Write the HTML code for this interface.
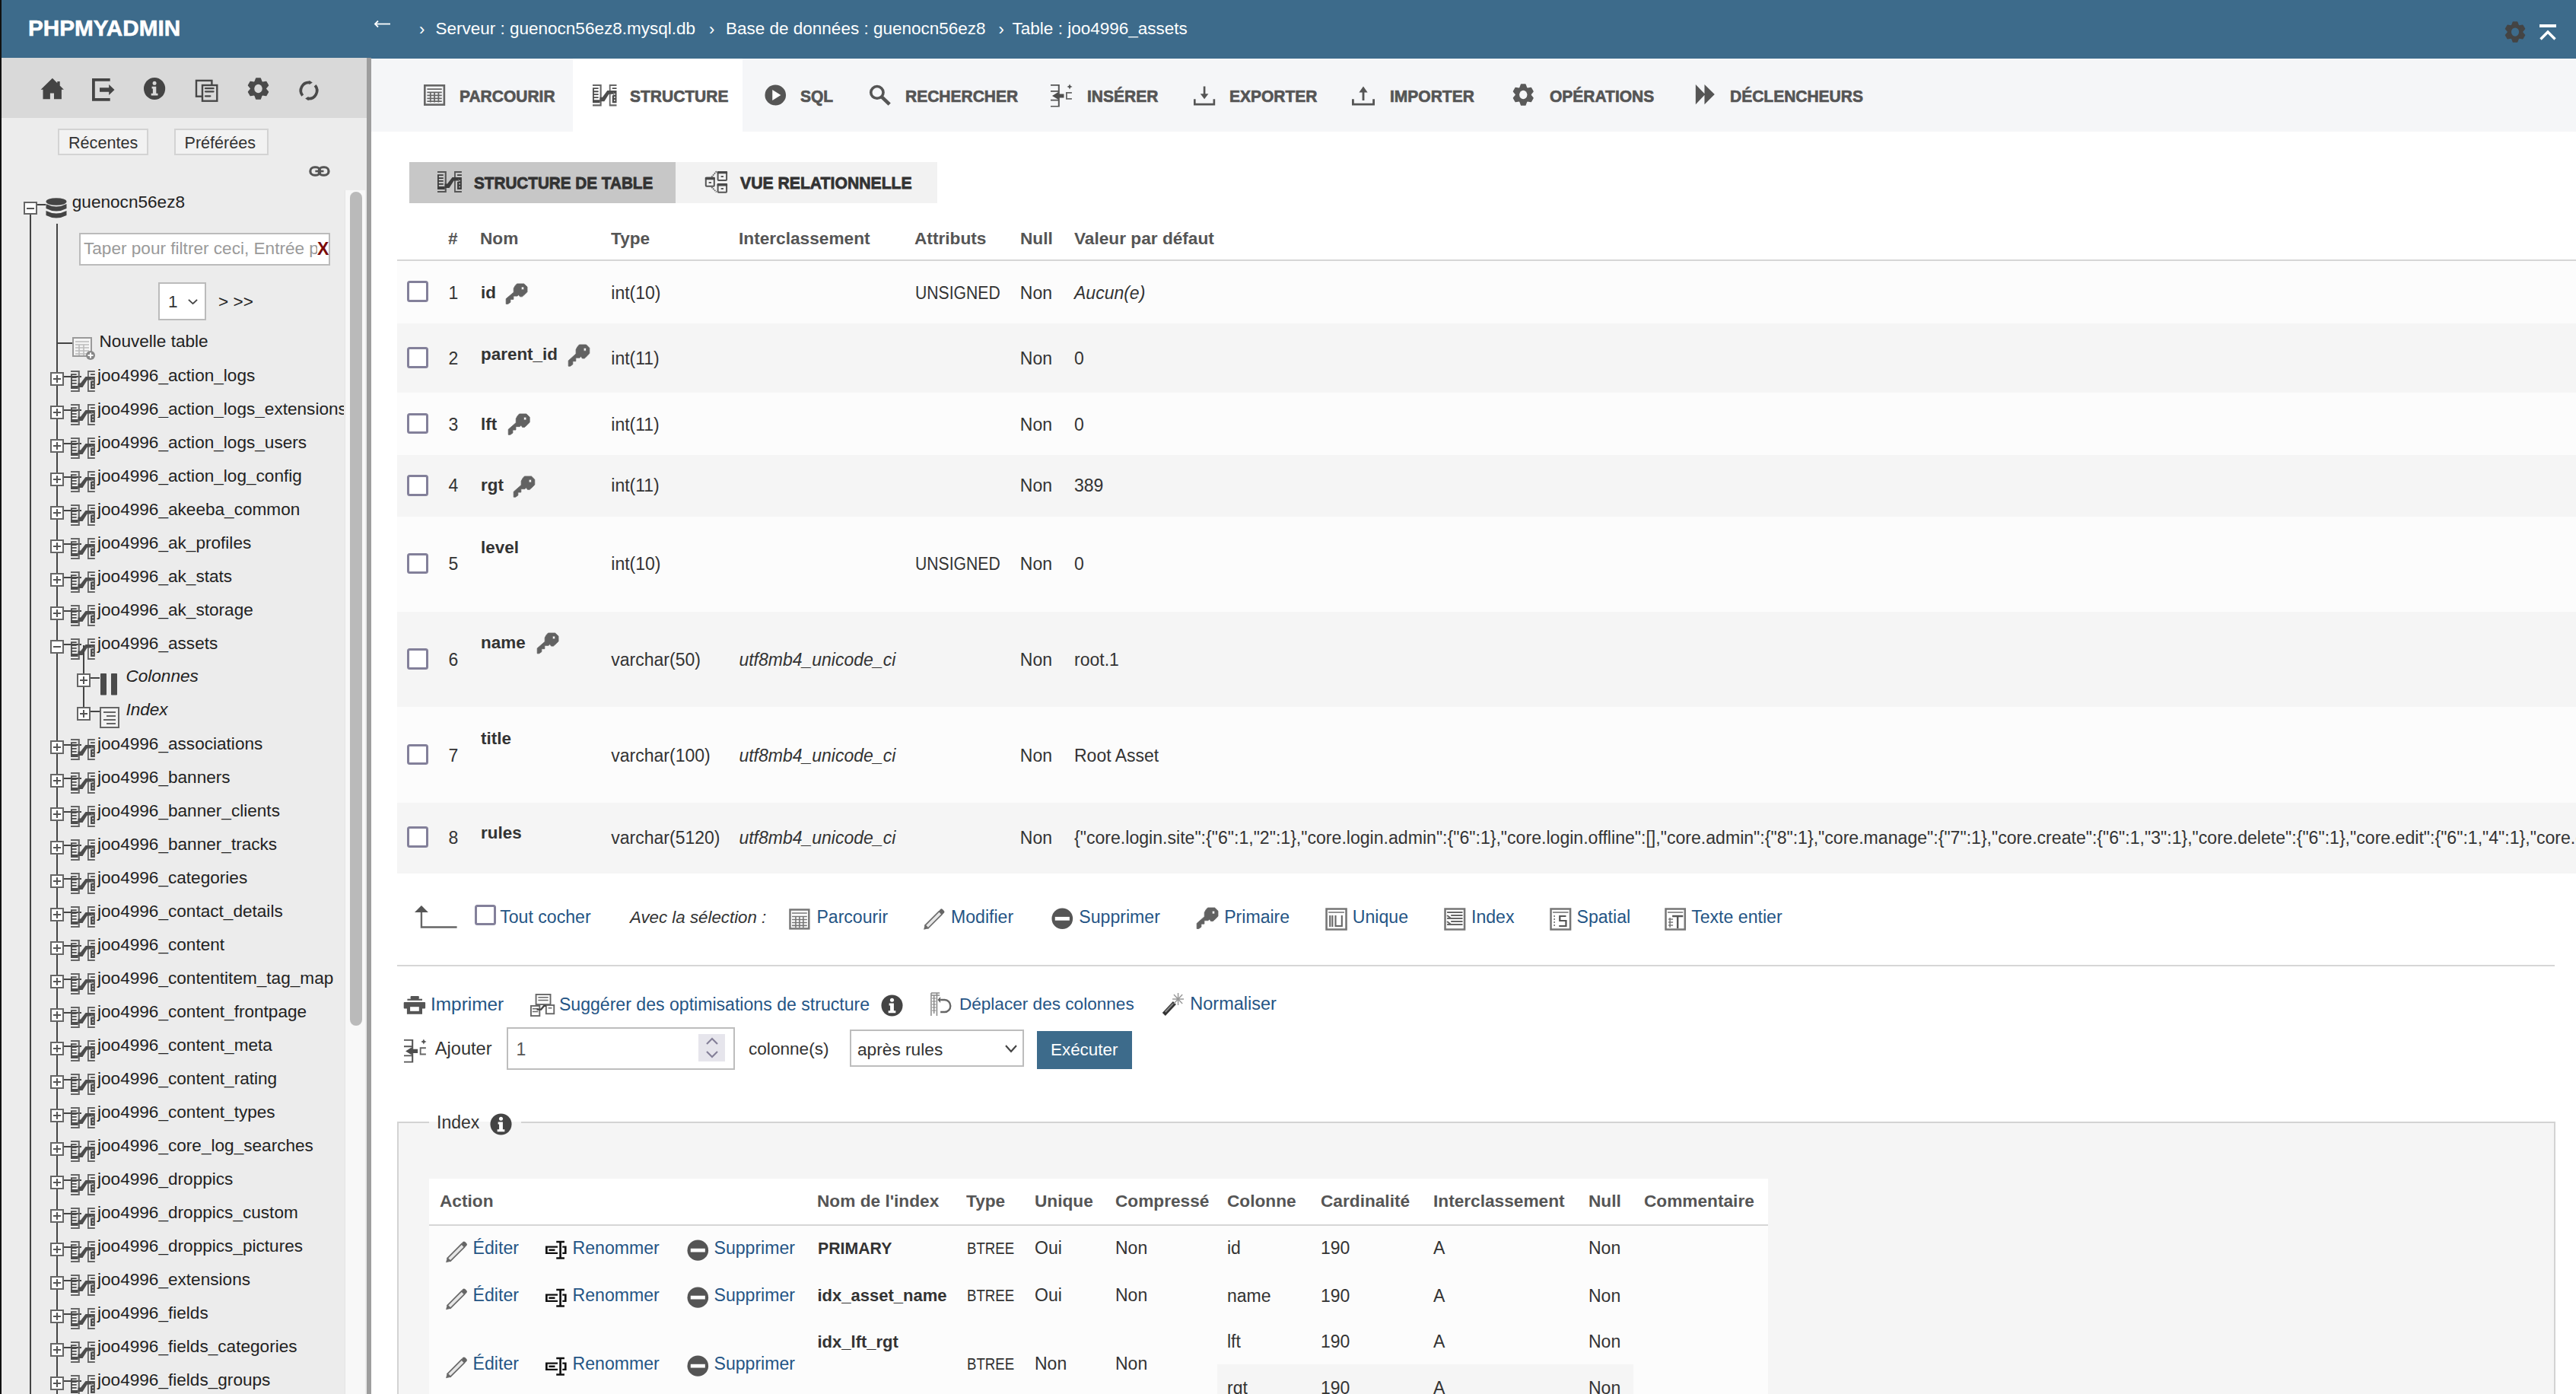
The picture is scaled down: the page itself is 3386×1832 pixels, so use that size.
<!DOCTYPE html><html><head><meta charset="utf-8"><style>
html,body{margin:0;padding:0;overflow:hidden;}
body{width:3386px;height:1832px;overflow:hidden;position:relative;background:#fff;font-family:"Liberation Sans",sans-serif;}
.t{position:absolute;white-space:pre;}
.r{position:absolute;}
svg.r{overflow:visible}
</style></head><body><div class="r" style="left:0.0px;top:0.0px;width:3386.0px;height:77.0px;background:#3d6b8b;"></div><div class="r" style="left:0.0px;top:0.0px;width:2.0px;height:1832.0px;background:#111;"></div><div class="t" style="left:37.0px;top:21.9px;font-size:29.7px;line-height:29.7px;font-weight:700;color:#fff;-webkit-text-stroke:0.6px #fff;">PHPMYADMIN</div><svg class="r" style="left:491.6px;top:27.0px;" width="21.0" height="9.0" viewBox="0 0 21 9" preserveAspectRatio="none"><path d="M1,4.5 L21,4.5" stroke="#fff" stroke-width="1.8"/><path d="M5,0.5 L1,4.5 L5,8.5" fill="none" stroke="#fff" stroke-width="1.8"/></svg><div class="t" style="left:572.5px;top:27.0px;font-size:22.5px;line-height:22.5px;font-weight:400;color:#fff;">Serveur : guenocn56ez8.mysql.db</div><div class="t" style="left:954.0px;top:27.0px;font-size:22.5px;line-height:22.5px;font-weight:400;color:#fff;">Base de données : guenocn56ez8</div><div class="t" style="left:1330.6px;top:27.0px;font-size:22.5px;line-height:22.5px;font-weight:400;color:#fff;">Table : joo4996_assets</div><div class="t" style="left:551.0px;top:28.4px;font-size:22px;line-height:22px;font-weight:400;color:#fff;">&#8250;</div><div class="t" style="left:932.0px;top:28.4px;font-size:22px;line-height:22px;font-weight:400;color:#fff;">&#8250;</div><div class="t" style="left:1312.5px;top:28.4px;font-size:22px;line-height:22px;font-weight:400;color:#fff;">&#8250;</div><svg class="r" style="left:3291.0px;top:27.0px;" width="30.0" height="30.0" viewBox="0 0 32 32" preserveAspectRatio="none"><circle cx="16" cy="16" r="10.8" fill="#444"/><path d="M11,8 L13.2,2.2 L18.8,2.2 L21,8 Z" fill="#444" stroke="#444" stroke-width="1.6" stroke-linejoin="round" transform="rotate(0 16 16)"/><path d="M11,8 L13.2,2.2 L18.8,2.2 L21,8 Z" fill="#444" stroke="#444" stroke-width="1.6" stroke-linejoin="round" transform="rotate(60 16 16)"/><path d="M11,8 L13.2,2.2 L18.8,2.2 L21,8 Z" fill="#444" stroke="#444" stroke-width="1.6" stroke-linejoin="round" transform="rotate(120 16 16)"/><path d="M11,8 L13.2,2.2 L18.8,2.2 L21,8 Z" fill="#444" stroke="#444" stroke-width="1.6" stroke-linejoin="round" transform="rotate(180 16 16)"/><path d="M11,8 L13.2,2.2 L18.8,2.2 L21,8 Z" fill="#444" stroke="#444" stroke-width="1.6" stroke-linejoin="round" transform="rotate(240 16 16)"/><path d="M11,8 L13.2,2.2 L18.8,2.2 L21,8 Z" fill="#444" stroke="#444" stroke-width="1.6" stroke-linejoin="round" transform="rotate(300 16 16)"/><ellipse cx="16" cy="16" rx="5.4" ry="6" fill="#3d6b8b"/></svg><svg class="r" style="left:3338.0px;top:31.0px;" width="22.0" height="22.0" viewBox="0 0 22 22" preserveAspectRatio="none"><rect x="0" y="1" width="22" height="4" fill="#fff"/><path d="M1.5,20.5 L11,11 L20.5,20.5" fill="none" stroke="#fff" stroke-width="3.4"/></svg><div class="r" style="left:2.0px;top:76.0px;width:480.0px;height:79.0px;background:#d9d9d9;"></div><div class="r" style="left:2.0px;top:155.0px;width:480.0px;height:1677.0px;background:#ececec;"></div><div class="r" style="left:482.0px;top:76.0px;width:6.0px;height:1756.0px;background:#9e9e9e;"></div><svg class="r" style="left:53.0px;top:102.0px;" width="31.0" height="29.0" viewBox="0 0 31 29" preserveAspectRatio="none"><path fill="#444" d="M15.9,0.8 L30.9,15.8 L27.9,15.8 L27.9,28.2 L18,28.2 L18,20.5 L12.9,20.5 L12.9,28.2 L3.5,28.2 L3.5,15.8 L0.6,15.8 Z M22.3,5 L25.7,5 L25.7,10.8 L22.3,7.4 Z"/></svg><svg class="r" style="left:120.0px;top:102.0px;" width="31.0" height="31.0" viewBox="0 0 31 31" preserveAspectRatio="none"><path fill="#444" d="M1,1 H24.7 V4.8 H4.8 V26.9 H24.7 V30.7 H1 Z M11,13.2 H23.2 V9 L30.5,16 L23.2,23 V18.8 H11 Z"/></svg><svg class="r" style="left:188.8px;top:102.0px;" width="28.2" height="29.0" viewBox="0 0 32 32" preserveAspectRatio="none"><circle cx="16" cy="16" r="16" fill="#444"/><circle cx="16" cy="8" r="2.8" fill="#d9d9d9"/><path fill="#d9d9d9" d="M12,13 L18.5,13 L18.5,23 L21,23 L21,26 L11,26 L11,23 L13.5,23 L13.5,16 L12,16 Z"/></svg><svg class="r" style="left:255.0px;top:103.0px;" width="32.0" height="31.0" viewBox="0 0 32 31" preserveAspectRatio="none"><rect x="3" y="2.9" width="20.4" height="20.8" fill="none" stroke="#474747" stroke-width="2.4"/><rect x="11" y="9" width="19.3" height="20.7" fill="#d9d9d9" stroke="#474747" stroke-width="2.4"/><path stroke="#474747" stroke-width="2.2" stroke-linecap="round" d="M15,13.2 H25.6 M15,17.3 H25.6 M15,23.3 H21.4"/></svg><svg class="r" style="left:323.5px;top:101.0px;" width="31.0" height="31.0" viewBox="0 0 32 32" preserveAspectRatio="none"><circle cx="16" cy="16" r="10.8" fill="#4a4a4a"/><path d="M11,8 L13.2,2.2 L18.8,2.2 L21,8 Z" fill="#4a4a4a" stroke="#4a4a4a" stroke-width="1.6" stroke-linejoin="round" transform="rotate(0 16 16)"/><path d="M11,8 L13.2,2.2 L18.8,2.2 L21,8 Z" fill="#4a4a4a" stroke="#4a4a4a" stroke-width="1.6" stroke-linejoin="round" transform="rotate(60 16 16)"/><path d="M11,8 L13.2,2.2 L18.8,2.2 L21,8 Z" fill="#4a4a4a" stroke="#4a4a4a" stroke-width="1.6" stroke-linejoin="round" transform="rotate(120 16 16)"/><path d="M11,8 L13.2,2.2 L18.8,2.2 L21,8 Z" fill="#4a4a4a" stroke="#4a4a4a" stroke-width="1.6" stroke-linejoin="round" transform="rotate(180 16 16)"/><path d="M11,8 L13.2,2.2 L18.8,2.2 L21,8 Z" fill="#4a4a4a" stroke="#4a4a4a" stroke-width="1.6" stroke-linejoin="round" transform="rotate(240 16 16)"/><path d="M11,8 L13.2,2.2 L18.8,2.2 L21,8 Z" fill="#4a4a4a" stroke="#4a4a4a" stroke-width="1.6" stroke-linejoin="round" transform="rotate(300 16 16)"/><ellipse cx="16" cy="16" rx="5.4" ry="6" fill="#d9d9d9"/></svg><svg class="r" style="left:392.0px;top:105.0px;" width="28.0" height="28.0" viewBox="0 0 28 28" preserveAspectRatio="none"><path fill="none" stroke="#4a4a4a" stroke-width="3.7" d="M15.1,3.46 A10.6,10.6 0 0,0 5.69,20.58 M22.17,7.24 A10.6,10.6 0 0,1 12.89,24.54"/><path fill="#4a4a4a" d="M14.5,0.8 L18.8,3.5 L14.5,6.2 Z M13.5,21.8 L9.2,24.5 L13.5,27.2 Z"/></svg><div class="r" style="left:76.0px;top:169.0px;width:119.0px;height:35.0px;background:#f2f2f2;border:2px solid #d3d3d3;box-sizing:border-box;"></div><div class="r" style="left:229.0px;top:169.0px;width:124.0px;height:35.0px;background:#f2f2f2;border:2px solid #d3d3d3;box-sizing:border-box;"></div><div class="t" style="left:90.0px;top:176.7px;font-size:21.6px;line-height:21.6px;font-weight:400;color:#333;">Récentes</div><div class="t" style="left:242.5px;top:176.7px;font-size:21.6px;line-height:21.6px;font-weight:400;color:#333;">Préférées</div><svg class="r" style="left:405.7px;top:218.0px;" width="27.9" height="14.0" viewBox="0 0 30 16" preserveAspectRatio="none"><rect x="2" y="2" width="14" height="12" rx="6" fill="none" stroke="#555" stroke-width="3.5"/><rect x="14" y="2" width="14" height="12" rx="6" fill="none" stroke="#555" stroke-width="3.5"/><rect x="9" y="6.5" width="12" height="3" fill="#555"/></svg><div class="r" style="left:452.5px;top:250.0px;width:1.5px;height:1582.0px;background:#e4e4e4;"></div><div class="r" style="left:454.0px;top:250.0px;width:26.0px;height:1582.0px;background:#f8f8f8;"></div><div class="r" style="left:460.0px;top:252.0px;width:16.0px;height:1095.5px;background:#bababa;border-radius:8px;"></div><div class="r" style="left:39.0px;top:282.0px;width:2.0px;height:1550.0px;background:#444;"></div><div class="r" style="left:73.7px;top:294.0px;width:2.0px;height:1538.0px;background:#444;"></div><div class="r" style="left:31.0px;top:265.0px;width:17.6px;height:17.0px;background:#fff;border:2px solid #666;box-sizing:border-box;"></div><div class="r" style="left:35.0px;top:272.5px;width:9.6px;height:2.0px;background:#555;"></div><div class="r" style="left:48.6px;top:267.5px;width:11.4px;height:2.0px;background:#444;"></div><svg class="r" style="left:60.0px;top:260.0px;" width="28.0" height="28.0" viewBox="0 0 28 28" preserveAspectRatio="none"><ellipse cx="14" cy="5" rx="13.5" ry="4.8" fill="#444"/><path fill="#444" d="M0.5,8 Q14,15 27.5,8 L27.5,14 Q14,21 0.5,14 Z M0.5,17 Q14,24 27.5,17 L27.5,23 Q14,30 0.5,23 Z"/></svg><div class="t" style="left:94.8px;top:255.1px;font-size:22.6px;line-height:22.6px;font-weight:400;color:#222;">guenocn56ez8</div><div class="r" style="left:104.0px;top:306.0px;width:330.0px;height:43.0px;background:#fff;border:2px solid #bbb;box-sizing:border-box;"></div><div class="t" style="left:110.0px;top:315.9px;font-size:22.6px;line-height:22.6px;font-weight:400;color:#9a9a9a;width:307px;overflow:hidden;">Taper pour filtrer ceci, Entrée p</div><div class="t" style="left:417.0px;top:315.5px;font-size:23px;line-height:23px;font-weight:700;color:#7a0a0a;">X</div><div class="r" style="left:208.0px;top:371.0px;width:63.0px;height:50.4px;background:#fff;border:2px solid #bbb;box-sizing:border-box;"></div><div class="t" style="left:221.0px;top:385.9px;font-size:22.6px;line-height:22.6px;font-weight:400;color:#333;">1</div><svg class="r" style="left:247.0px;top:393.0px;" width="13.0" height="7.0" viewBox="0 0 14 8" preserveAspectRatio="none"><path d="M1,1 L7,7 L13,1" fill="none" stroke="#444" stroke-width="2"/></svg><div class="t" style="left:287.0px;top:385.9px;font-size:22.6px;line-height:22.6px;font-weight:400;color:#222;">&gt; &gt;&gt;</div><div class="r" style="left:75.7px;top:450.0px;width:19.3px;height:2.0px;background:#444;"></div><svg class="r" style="left:95.0px;top:443.0px;" width="30.0" height="30.0" viewBox="0 0 30 30" preserveAspectRatio="none"><rect x="1" y="1" width="24" height="24" fill="#f4f4f4" stroke="#9a9a9a" stroke-width="2"/><path stroke="#bbb" stroke-width="1.6" d="M4,6 L22,6 M4,10 L22,10 M4,14 L22,14 M4,18 L22,18 M4,22 L22,22 M9,10 L9,24 M15,10 L15,24"/><circle cx="24" cy="24" r="6" fill="#888"/><path stroke="#fff" stroke-width="2" d="M24,20.5 L24,27.5 M20.5,24 L27.5,24"/></svg><div class="t" style="left:130.5px;top:437.9px;font-size:22.6px;line-height:22.6px;font-weight:400;color:#222;">Nouvelle table</div><div class="r" style="left:66.0px;top:489.3px;width:18.0px;height:18.0px;background:#fff;border:2px solid #666;box-sizing:border-box;"></div><div class="r" style="left:70.0px;top:497.3px;width:10.0px;height:2.0px;background:#555;"></div><div class="r" style="left:74.0px;top:493.3px;width:2.0px;height:10.0px;background:#555;"></div><div class="r" style="left:84.0px;top:494.0px;width:23.0px;height:2.0px;background:#444;"></div><svg class="r" style="left:93.0px;top:487.0px;" width="32.0" height="28.0" viewBox="0 0 32 28" preserveAspectRatio="none"><path fill="#666" d="M0,0 H11.8 V28 H0 V26 H9.7 V2 H0 Z"/><path fill="#4d4d4d" d="M0,4.2 H1.8 V24 H0 Z M0,4.2 H7.7 V6 H0 Z M0,8.2 H7.7 V10 H0 Z M0,12 H7.7 V13.8 H0 Z M0,16 H7.7 V17.8 H0 Z M0,20 H9.7 V24 H0 Z"/><path fill="#666" d="M22,0 H31.8 V2 H23.8 V26 H31.8 V28 H22 Z"/><path fill="#4d4d4d" d="M26,4.2 H31.8 V6 H26 Z M23.8,8 H31.8 V10 H23.8 Z M27.6,8 H31.8 V24 H27.6 Z M26,14 H27.6 V24 H26 Z"/><rect x="28.3" y="11.8" width="1.6" height="1.6" fill="#ececec"/><rect x="28.3" y="15.8" width="1.6" height="1.6" fill="#ececec"/><rect x="28.3" y="19.8" width="1.6" height="1.6" fill="#ececec"/><path fill="#4d4d4d" d="M9.5,16.5 L13,16.5 L19.5,8 L27.6,8 L27.6,12.5 L21.5,12.5 L15.5,22 L9.5,22 Z"/></svg><div class="t" style="left:128.0px;top:482.9px;font-size:22.6px;line-height:22.6px;font-weight:400;color:#222;">joo4996_action_logs</div><div class="r" style="left:66.0px;top:533.3px;width:18.0px;height:18.0px;background:#fff;border:2px solid #666;box-sizing:border-box;"></div><div class="r" style="left:70.0px;top:541.3px;width:10.0px;height:2.0px;background:#555;"></div><div class="r" style="left:74.0px;top:537.3px;width:2.0px;height:10.0px;background:#555;"></div><div class="r" style="left:84.0px;top:538.0px;width:23.0px;height:2.0px;background:#444;"></div><svg class="r" style="left:93.0px;top:531.0px;" width="32.0" height="28.0" viewBox="0 0 32 28" preserveAspectRatio="none"><path fill="#666" d="M0,0 H11.8 V28 H0 V26 H9.7 V2 H0 Z"/><path fill="#4d4d4d" d="M0,4.2 H1.8 V24 H0 Z M0,4.2 H7.7 V6 H0 Z M0,8.2 H7.7 V10 H0 Z M0,12 H7.7 V13.8 H0 Z M0,16 H7.7 V17.8 H0 Z M0,20 H9.7 V24 H0 Z"/><path fill="#666" d="M22,0 H31.8 V2 H23.8 V26 H31.8 V28 H22 Z"/><path fill="#4d4d4d" d="M26,4.2 H31.8 V6 H26 Z M23.8,8 H31.8 V10 H23.8 Z M27.6,8 H31.8 V24 H27.6 Z M26,14 H27.6 V24 H26 Z"/><rect x="28.3" y="11.8" width="1.6" height="1.6" fill="#ececec"/><rect x="28.3" y="15.8" width="1.6" height="1.6" fill="#ececec"/><rect x="28.3" y="19.8" width="1.6" height="1.6" fill="#ececec"/><path fill="#4d4d4d" d="M9.5,16.5 L13,16.5 L19.5,8 L27.6,8 L27.6,12.5 L21.5,12.5 L15.5,22 L9.5,22 Z"/></svg><div class="t" style="left:128.0px;top:526.9px;font-size:22.6px;line-height:22.6px;font-weight:400;color:#222;width:324px;overflow:hidden;">joo4996_action_logs_extensions</div><div class="r" style="left:66.0px;top:577.3px;width:18.0px;height:18.0px;background:#fff;border:2px solid #666;box-sizing:border-box;"></div><div class="r" style="left:70.0px;top:585.3px;width:10.0px;height:2.0px;background:#555;"></div><div class="r" style="left:74.0px;top:581.3px;width:2.0px;height:10.0px;background:#555;"></div><div class="r" style="left:84.0px;top:582.0px;width:23.0px;height:2.0px;background:#444;"></div><svg class="r" style="left:93.0px;top:575.0px;" width="32.0" height="28.0" viewBox="0 0 32 28" preserveAspectRatio="none"><path fill="#666" d="M0,0 H11.8 V28 H0 V26 H9.7 V2 H0 Z"/><path fill="#4d4d4d" d="M0,4.2 H1.8 V24 H0 Z M0,4.2 H7.7 V6 H0 Z M0,8.2 H7.7 V10 H0 Z M0,12 H7.7 V13.8 H0 Z M0,16 H7.7 V17.8 H0 Z M0,20 H9.7 V24 H0 Z"/><path fill="#666" d="M22,0 H31.8 V2 H23.8 V26 H31.8 V28 H22 Z"/><path fill="#4d4d4d" d="M26,4.2 H31.8 V6 H26 Z M23.8,8 H31.8 V10 H23.8 Z M27.6,8 H31.8 V24 H27.6 Z M26,14 H27.6 V24 H26 Z"/><rect x="28.3" y="11.8" width="1.6" height="1.6" fill="#ececec"/><rect x="28.3" y="15.8" width="1.6" height="1.6" fill="#ececec"/><rect x="28.3" y="19.8" width="1.6" height="1.6" fill="#ececec"/><path fill="#4d4d4d" d="M9.5,16.5 L13,16.5 L19.5,8 L27.6,8 L27.6,12.5 L21.5,12.5 L15.5,22 L9.5,22 Z"/></svg><div class="t" style="left:128.0px;top:570.9px;font-size:22.6px;line-height:22.6px;font-weight:400;color:#222;">joo4996_action_logs_users</div><div class="r" style="left:66.0px;top:621.3px;width:18.0px;height:18.0px;background:#fff;border:2px solid #666;box-sizing:border-box;"></div><div class="r" style="left:70.0px;top:629.3px;width:10.0px;height:2.0px;background:#555;"></div><div class="r" style="left:74.0px;top:625.3px;width:2.0px;height:10.0px;background:#555;"></div><div class="r" style="left:84.0px;top:626.0px;width:23.0px;height:2.0px;background:#444;"></div><svg class="r" style="left:93.0px;top:619.0px;" width="32.0" height="28.0" viewBox="0 0 32 28" preserveAspectRatio="none"><path fill="#666" d="M0,0 H11.8 V28 H0 V26 H9.7 V2 H0 Z"/><path fill="#4d4d4d" d="M0,4.2 H1.8 V24 H0 Z M0,4.2 H7.7 V6 H0 Z M0,8.2 H7.7 V10 H0 Z M0,12 H7.7 V13.8 H0 Z M0,16 H7.7 V17.8 H0 Z M0,20 H9.7 V24 H0 Z"/><path fill="#666" d="M22,0 H31.8 V2 H23.8 V26 H31.8 V28 H22 Z"/><path fill="#4d4d4d" d="M26,4.2 H31.8 V6 H26 Z M23.8,8 H31.8 V10 H23.8 Z M27.6,8 H31.8 V24 H27.6 Z M26,14 H27.6 V24 H26 Z"/><rect x="28.3" y="11.8" width="1.6" height="1.6" fill="#ececec"/><rect x="28.3" y="15.8" width="1.6" height="1.6" fill="#ececec"/><rect x="28.3" y="19.8" width="1.6" height="1.6" fill="#ececec"/><path fill="#4d4d4d" d="M9.5,16.5 L13,16.5 L19.5,8 L27.6,8 L27.6,12.5 L21.5,12.5 L15.5,22 L9.5,22 Z"/></svg><div class="t" style="left:128.0px;top:614.9px;font-size:22.6px;line-height:22.6px;font-weight:400;color:#222;">joo4996_action_log_config</div><div class="r" style="left:66.0px;top:665.3px;width:18.0px;height:18.0px;background:#fff;border:2px solid #666;box-sizing:border-box;"></div><div class="r" style="left:70.0px;top:673.3px;width:10.0px;height:2.0px;background:#555;"></div><div class="r" style="left:74.0px;top:669.3px;width:2.0px;height:10.0px;background:#555;"></div><div class="r" style="left:84.0px;top:670.0px;width:23.0px;height:2.0px;background:#444;"></div><svg class="r" style="left:93.0px;top:663.0px;" width="32.0" height="28.0" viewBox="0 0 32 28" preserveAspectRatio="none"><path fill="#666" d="M0,0 H11.8 V28 H0 V26 H9.7 V2 H0 Z"/><path fill="#4d4d4d" d="M0,4.2 H1.8 V24 H0 Z M0,4.2 H7.7 V6 H0 Z M0,8.2 H7.7 V10 H0 Z M0,12 H7.7 V13.8 H0 Z M0,16 H7.7 V17.8 H0 Z M0,20 H9.7 V24 H0 Z"/><path fill="#666" d="M22,0 H31.8 V2 H23.8 V26 H31.8 V28 H22 Z"/><path fill="#4d4d4d" d="M26,4.2 H31.8 V6 H26 Z M23.8,8 H31.8 V10 H23.8 Z M27.6,8 H31.8 V24 H27.6 Z M26,14 H27.6 V24 H26 Z"/><rect x="28.3" y="11.8" width="1.6" height="1.6" fill="#ececec"/><rect x="28.3" y="15.8" width="1.6" height="1.6" fill="#ececec"/><rect x="28.3" y="19.8" width="1.6" height="1.6" fill="#ececec"/><path fill="#4d4d4d" d="M9.5,16.5 L13,16.5 L19.5,8 L27.6,8 L27.6,12.5 L21.5,12.5 L15.5,22 L9.5,22 Z"/></svg><div class="t" style="left:128.0px;top:658.9px;font-size:22.6px;line-height:22.6px;font-weight:400;color:#222;">joo4996_akeeba_common</div><div class="r" style="left:66.0px;top:709.3px;width:18.0px;height:18.0px;background:#fff;border:2px solid #666;box-sizing:border-box;"></div><div class="r" style="left:70.0px;top:717.3px;width:10.0px;height:2.0px;background:#555;"></div><div class="r" style="left:74.0px;top:713.3px;width:2.0px;height:10.0px;background:#555;"></div><div class="r" style="left:84.0px;top:714.0px;width:23.0px;height:2.0px;background:#444;"></div><svg class="r" style="left:93.0px;top:707.0px;" width="32.0" height="28.0" viewBox="0 0 32 28" preserveAspectRatio="none"><path fill="#666" d="M0,0 H11.8 V28 H0 V26 H9.7 V2 H0 Z"/><path fill="#4d4d4d" d="M0,4.2 H1.8 V24 H0 Z M0,4.2 H7.7 V6 H0 Z M0,8.2 H7.7 V10 H0 Z M0,12 H7.7 V13.8 H0 Z M0,16 H7.7 V17.8 H0 Z M0,20 H9.7 V24 H0 Z"/><path fill="#666" d="M22,0 H31.8 V2 H23.8 V26 H31.8 V28 H22 Z"/><path fill="#4d4d4d" d="M26,4.2 H31.8 V6 H26 Z M23.8,8 H31.8 V10 H23.8 Z M27.6,8 H31.8 V24 H27.6 Z M26,14 H27.6 V24 H26 Z"/><rect x="28.3" y="11.8" width="1.6" height="1.6" fill="#ececec"/><rect x="28.3" y="15.8" width="1.6" height="1.6" fill="#ececec"/><rect x="28.3" y="19.8" width="1.6" height="1.6" fill="#ececec"/><path fill="#4d4d4d" d="M9.5,16.5 L13,16.5 L19.5,8 L27.6,8 L27.6,12.5 L21.5,12.5 L15.5,22 L9.5,22 Z"/></svg><div class="t" style="left:128.0px;top:702.9px;font-size:22.6px;line-height:22.6px;font-weight:400;color:#222;">joo4996_ak_profiles</div><div class="r" style="left:66.0px;top:753.3px;width:18.0px;height:18.0px;background:#fff;border:2px solid #666;box-sizing:border-box;"></div><div class="r" style="left:70.0px;top:761.3px;width:10.0px;height:2.0px;background:#555;"></div><div class="r" style="left:74.0px;top:757.3px;width:2.0px;height:10.0px;background:#555;"></div><div class="r" style="left:84.0px;top:758.0px;width:23.0px;height:2.0px;background:#444;"></div><svg class="r" style="left:93.0px;top:751.0px;" width="32.0" height="28.0" viewBox="0 0 32 28" preserveAspectRatio="none"><path fill="#666" d="M0,0 H11.8 V28 H0 V26 H9.7 V2 H0 Z"/><path fill="#4d4d4d" d="M0,4.2 H1.8 V24 H0 Z M0,4.2 H7.7 V6 H0 Z M0,8.2 H7.7 V10 H0 Z M0,12 H7.7 V13.8 H0 Z M0,16 H7.7 V17.8 H0 Z M0,20 H9.7 V24 H0 Z"/><path fill="#666" d="M22,0 H31.8 V2 H23.8 V26 H31.8 V28 H22 Z"/><path fill="#4d4d4d" d="M26,4.2 H31.8 V6 H26 Z M23.8,8 H31.8 V10 H23.8 Z M27.6,8 H31.8 V24 H27.6 Z M26,14 H27.6 V24 H26 Z"/><rect x="28.3" y="11.8" width="1.6" height="1.6" fill="#ececec"/><rect x="28.3" y="15.8" width="1.6" height="1.6" fill="#ececec"/><rect x="28.3" y="19.8" width="1.6" height="1.6" fill="#ececec"/><path fill="#4d4d4d" d="M9.5,16.5 L13,16.5 L19.5,8 L27.6,8 L27.6,12.5 L21.5,12.5 L15.5,22 L9.5,22 Z"/></svg><div class="t" style="left:128.0px;top:746.9px;font-size:22.6px;line-height:22.6px;font-weight:400;color:#222;">joo4996_ak_stats</div><div class="r" style="left:66.0px;top:797.3px;width:18.0px;height:18.0px;background:#fff;border:2px solid #666;box-sizing:border-box;"></div><div class="r" style="left:70.0px;top:805.3px;width:10.0px;height:2.0px;background:#555;"></div><div class="r" style="left:74.0px;top:801.3px;width:2.0px;height:10.0px;background:#555;"></div><div class="r" style="left:84.0px;top:802.0px;width:23.0px;height:2.0px;background:#444;"></div><svg class="r" style="left:93.0px;top:795.0px;" width="32.0" height="28.0" viewBox="0 0 32 28" preserveAspectRatio="none"><path fill="#666" d="M0,0 H11.8 V28 H0 V26 H9.7 V2 H0 Z"/><path fill="#4d4d4d" d="M0,4.2 H1.8 V24 H0 Z M0,4.2 H7.7 V6 H0 Z M0,8.2 H7.7 V10 H0 Z M0,12 H7.7 V13.8 H0 Z M0,16 H7.7 V17.8 H0 Z M0,20 H9.7 V24 H0 Z"/><path fill="#666" d="M22,0 H31.8 V2 H23.8 V26 H31.8 V28 H22 Z"/><path fill="#4d4d4d" d="M26,4.2 H31.8 V6 H26 Z M23.8,8 H31.8 V10 H23.8 Z M27.6,8 H31.8 V24 H27.6 Z M26,14 H27.6 V24 H26 Z"/><rect x="28.3" y="11.8" width="1.6" height="1.6" fill="#ececec"/><rect x="28.3" y="15.8" width="1.6" height="1.6" fill="#ececec"/><rect x="28.3" y="19.8" width="1.6" height="1.6" fill="#ececec"/><path fill="#4d4d4d" d="M9.5,16.5 L13,16.5 L19.5,8 L27.6,8 L27.6,12.5 L21.5,12.5 L15.5,22 L9.5,22 Z"/></svg><div class="t" style="left:128.0px;top:790.9px;font-size:22.6px;line-height:22.6px;font-weight:400;color:#222;">joo4996_ak_storage</div><div class="r" style="left:66.0px;top:841.3px;width:18.0px;height:18.0px;background:#fff;border:2px solid #666;box-sizing:border-box;"></div><div class="r" style="left:70.0px;top:849.3px;width:10.0px;height:2.0px;background:#555;"></div><div class="r" style="left:84.0px;top:846.0px;width:23.0px;height:2.0px;background:#444;"></div><svg class="r" style="left:93.0px;top:839.0px;" width="32.0" height="28.0" viewBox="0 0 32 28" preserveAspectRatio="none"><path fill="#666" d="M0,0 H11.8 V28 H0 V26 H9.7 V2 H0 Z"/><path fill="#4d4d4d" d="M0,4.2 H1.8 V24 H0 Z M0,4.2 H7.7 V6 H0 Z M0,8.2 H7.7 V10 H0 Z M0,12 H7.7 V13.8 H0 Z M0,16 H7.7 V17.8 H0 Z M0,20 H9.7 V24 H0 Z"/><path fill="#666" d="M22,0 H31.8 V2 H23.8 V26 H31.8 V28 H22 Z"/><path fill="#4d4d4d" d="M26,4.2 H31.8 V6 H26 Z M23.8,8 H31.8 V10 H23.8 Z M27.6,8 H31.8 V24 H27.6 Z M26,14 H27.6 V24 H26 Z"/><rect x="28.3" y="11.8" width="1.6" height="1.6" fill="#ececec"/><rect x="28.3" y="15.8" width="1.6" height="1.6" fill="#ececec"/><rect x="28.3" y="19.8" width="1.6" height="1.6" fill="#ececec"/><path fill="#4d4d4d" d="M9.5,16.5 L13,16.5 L19.5,8 L27.6,8 L27.6,12.5 L21.5,12.5 L15.5,22 L9.5,22 Z"/></svg><div class="t" style="left:128.0px;top:834.9px;font-size:22.6px;line-height:22.6px;font-weight:400;color:#222;">joo4996_assets</div><div class="r" style="left:66.0px;top:973.3px;width:18.0px;height:18.0px;background:#fff;border:2px solid #666;box-sizing:border-box;"></div><div class="r" style="left:70.0px;top:981.3px;width:10.0px;height:2.0px;background:#555;"></div><div class="r" style="left:74.0px;top:977.3px;width:2.0px;height:10.0px;background:#555;"></div><div class="r" style="left:84.0px;top:978.0px;width:23.0px;height:2.0px;background:#444;"></div><svg class="r" style="left:93.0px;top:971.0px;" width="32.0" height="28.0" viewBox="0 0 32 28" preserveAspectRatio="none"><path fill="#666" d="M0,0 H11.8 V28 H0 V26 H9.7 V2 H0 Z"/><path fill="#4d4d4d" d="M0,4.2 H1.8 V24 H0 Z M0,4.2 H7.7 V6 H0 Z M0,8.2 H7.7 V10 H0 Z M0,12 H7.7 V13.8 H0 Z M0,16 H7.7 V17.8 H0 Z M0,20 H9.7 V24 H0 Z"/><path fill="#666" d="M22,0 H31.8 V2 H23.8 V26 H31.8 V28 H22 Z"/><path fill="#4d4d4d" d="M26,4.2 H31.8 V6 H26 Z M23.8,8 H31.8 V10 H23.8 Z M27.6,8 H31.8 V24 H27.6 Z M26,14 H27.6 V24 H26 Z"/><rect x="28.3" y="11.8" width="1.6" height="1.6" fill="#ececec"/><rect x="28.3" y="15.8" width="1.6" height="1.6" fill="#ececec"/><rect x="28.3" y="19.8" width="1.6" height="1.6" fill="#ececec"/><path fill="#4d4d4d" d="M9.5,16.5 L13,16.5 L19.5,8 L27.6,8 L27.6,12.5 L21.5,12.5 L15.5,22 L9.5,22 Z"/></svg><div class="t" style="left:128.0px;top:966.9px;font-size:22.6px;line-height:22.6px;font-weight:400;color:#222;">joo4996_associations</div><div class="r" style="left:66.0px;top:1017.3px;width:18.0px;height:18.0px;background:#fff;border:2px solid #666;box-sizing:border-box;"></div><div class="r" style="left:70.0px;top:1025.3px;width:10.0px;height:2.0px;background:#555;"></div><div class="r" style="left:74.0px;top:1021.3px;width:2.0px;height:10.0px;background:#555;"></div><div class="r" style="left:84.0px;top:1022.0px;width:23.0px;height:2.0px;background:#444;"></div><svg class="r" style="left:93.0px;top:1015.0px;" width="32.0" height="28.0" viewBox="0 0 32 28" preserveAspectRatio="none"><path fill="#666" d="M0,0 H11.8 V28 H0 V26 H9.7 V2 H0 Z"/><path fill="#4d4d4d" d="M0,4.2 H1.8 V24 H0 Z M0,4.2 H7.7 V6 H0 Z M0,8.2 H7.7 V10 H0 Z M0,12 H7.7 V13.8 H0 Z M0,16 H7.7 V17.8 H0 Z M0,20 H9.7 V24 H0 Z"/><path fill="#666" d="M22,0 H31.8 V2 H23.8 V26 H31.8 V28 H22 Z"/><path fill="#4d4d4d" d="M26,4.2 H31.8 V6 H26 Z M23.8,8 H31.8 V10 H23.8 Z M27.6,8 H31.8 V24 H27.6 Z M26,14 H27.6 V24 H26 Z"/><rect x="28.3" y="11.8" width="1.6" height="1.6" fill="#ececec"/><rect x="28.3" y="15.8" width="1.6" height="1.6" fill="#ececec"/><rect x="28.3" y="19.8" width="1.6" height="1.6" fill="#ececec"/><path fill="#4d4d4d" d="M9.5,16.5 L13,16.5 L19.5,8 L27.6,8 L27.6,12.5 L21.5,12.5 L15.5,22 L9.5,22 Z"/></svg><div class="t" style="left:128.0px;top:1010.9px;font-size:22.6px;line-height:22.6px;font-weight:400;color:#222;">joo4996_banners</div><div class="r" style="left:66.0px;top:1061.3px;width:18.0px;height:18.0px;background:#fff;border:2px solid #666;box-sizing:border-box;"></div><div class="r" style="left:70.0px;top:1069.3px;width:10.0px;height:2.0px;background:#555;"></div><div class="r" style="left:74.0px;top:1065.3px;width:2.0px;height:10.0px;background:#555;"></div><div class="r" style="left:84.0px;top:1066.0px;width:23.0px;height:2.0px;background:#444;"></div><svg class="r" style="left:93.0px;top:1059.0px;" width="32.0" height="28.0" viewBox="0 0 32 28" preserveAspectRatio="none"><path fill="#666" d="M0,0 H11.8 V28 H0 V26 H9.7 V2 H0 Z"/><path fill="#4d4d4d" d="M0,4.2 H1.8 V24 H0 Z M0,4.2 H7.7 V6 H0 Z M0,8.2 H7.7 V10 H0 Z M0,12 H7.7 V13.8 H0 Z M0,16 H7.7 V17.8 H0 Z M0,20 H9.7 V24 H0 Z"/><path fill="#666" d="M22,0 H31.8 V2 H23.8 V26 H31.8 V28 H22 Z"/><path fill="#4d4d4d" d="M26,4.2 H31.8 V6 H26 Z M23.8,8 H31.8 V10 H23.8 Z M27.6,8 H31.8 V24 H27.6 Z M26,14 H27.6 V24 H26 Z"/><rect x="28.3" y="11.8" width="1.6" height="1.6" fill="#ececec"/><rect x="28.3" y="15.8" width="1.6" height="1.6" fill="#ececec"/><rect x="28.3" y="19.8" width="1.6" height="1.6" fill="#ececec"/><path fill="#4d4d4d" d="M9.5,16.5 L13,16.5 L19.5,8 L27.6,8 L27.6,12.5 L21.5,12.5 L15.5,22 L9.5,22 Z"/></svg><div class="t" style="left:128.0px;top:1054.9px;font-size:22.6px;line-height:22.6px;font-weight:400;color:#222;">joo4996_banner_clients</div><div class="r" style="left:66.0px;top:1105.3px;width:18.0px;height:18.0px;background:#fff;border:2px solid #666;box-sizing:border-box;"></div><div class="r" style="left:70.0px;top:1113.3px;width:10.0px;height:2.0px;background:#555;"></div><div class="r" style="left:74.0px;top:1109.3px;width:2.0px;height:10.0px;background:#555;"></div><div class="r" style="left:84.0px;top:1110.0px;width:23.0px;height:2.0px;background:#444;"></div><svg class="r" style="left:93.0px;top:1103.0px;" width="32.0" height="28.0" viewBox="0 0 32 28" preserveAspectRatio="none"><path fill="#666" d="M0,0 H11.8 V28 H0 V26 H9.7 V2 H0 Z"/><path fill="#4d4d4d" d="M0,4.2 H1.8 V24 H0 Z M0,4.2 H7.7 V6 H0 Z M0,8.2 H7.7 V10 H0 Z M0,12 H7.7 V13.8 H0 Z M0,16 H7.7 V17.8 H0 Z M0,20 H9.7 V24 H0 Z"/><path fill="#666" d="M22,0 H31.8 V2 H23.8 V26 H31.8 V28 H22 Z"/><path fill="#4d4d4d" d="M26,4.2 H31.8 V6 H26 Z M23.8,8 H31.8 V10 H23.8 Z M27.6,8 H31.8 V24 H27.6 Z M26,14 H27.6 V24 H26 Z"/><rect x="28.3" y="11.8" width="1.6" height="1.6" fill="#ececec"/><rect x="28.3" y="15.8" width="1.6" height="1.6" fill="#ececec"/><rect x="28.3" y="19.8" width="1.6" height="1.6" fill="#ececec"/><path fill="#4d4d4d" d="M9.5,16.5 L13,16.5 L19.5,8 L27.6,8 L27.6,12.5 L21.5,12.5 L15.5,22 L9.5,22 Z"/></svg><div class="t" style="left:128.0px;top:1098.9px;font-size:22.6px;line-height:22.6px;font-weight:400;color:#222;">joo4996_banner_tracks</div><div class="r" style="left:66.0px;top:1149.3px;width:18.0px;height:18.0px;background:#fff;border:2px solid #666;box-sizing:border-box;"></div><div class="r" style="left:70.0px;top:1157.3px;width:10.0px;height:2.0px;background:#555;"></div><div class="r" style="left:74.0px;top:1153.3px;width:2.0px;height:10.0px;background:#555;"></div><div class="r" style="left:84.0px;top:1154.0px;width:23.0px;height:2.0px;background:#444;"></div><svg class="r" style="left:93.0px;top:1147.0px;" width="32.0" height="28.0" viewBox="0 0 32 28" preserveAspectRatio="none"><path fill="#666" d="M0,0 H11.8 V28 H0 V26 H9.7 V2 H0 Z"/><path fill="#4d4d4d" d="M0,4.2 H1.8 V24 H0 Z M0,4.2 H7.7 V6 H0 Z M0,8.2 H7.7 V10 H0 Z M0,12 H7.7 V13.8 H0 Z M0,16 H7.7 V17.8 H0 Z M0,20 H9.7 V24 H0 Z"/><path fill="#666" d="M22,0 H31.8 V2 H23.8 V26 H31.8 V28 H22 Z"/><path fill="#4d4d4d" d="M26,4.2 H31.8 V6 H26 Z M23.8,8 H31.8 V10 H23.8 Z M27.6,8 H31.8 V24 H27.6 Z M26,14 H27.6 V24 H26 Z"/><rect x="28.3" y="11.8" width="1.6" height="1.6" fill="#ececec"/><rect x="28.3" y="15.8" width="1.6" height="1.6" fill="#ececec"/><rect x="28.3" y="19.8" width="1.6" height="1.6" fill="#ececec"/><path fill="#4d4d4d" d="M9.5,16.5 L13,16.5 L19.5,8 L27.6,8 L27.6,12.5 L21.5,12.5 L15.5,22 L9.5,22 Z"/></svg><div class="t" style="left:128.0px;top:1142.9px;font-size:22.6px;line-height:22.6px;font-weight:400;color:#222;">joo4996_categories</div><div class="r" style="left:66.0px;top:1193.3px;width:18.0px;height:18.0px;background:#fff;border:2px solid #666;box-sizing:border-box;"></div><div class="r" style="left:70.0px;top:1201.3px;width:10.0px;height:2.0px;background:#555;"></div><div class="r" style="left:74.0px;top:1197.3px;width:2.0px;height:10.0px;background:#555;"></div><div class="r" style="left:84.0px;top:1198.0px;width:23.0px;height:2.0px;background:#444;"></div><svg class="r" style="left:93.0px;top:1191.0px;" width="32.0" height="28.0" viewBox="0 0 32 28" preserveAspectRatio="none"><path fill="#666" d="M0,0 H11.8 V28 H0 V26 H9.7 V2 H0 Z"/><path fill="#4d4d4d" d="M0,4.2 H1.8 V24 H0 Z M0,4.2 H7.7 V6 H0 Z M0,8.2 H7.7 V10 H0 Z M0,12 H7.7 V13.8 H0 Z M0,16 H7.7 V17.8 H0 Z M0,20 H9.7 V24 H0 Z"/><path fill="#666" d="M22,0 H31.8 V2 H23.8 V26 H31.8 V28 H22 Z"/><path fill="#4d4d4d" d="M26,4.2 H31.8 V6 H26 Z M23.8,8 H31.8 V10 H23.8 Z M27.6,8 H31.8 V24 H27.6 Z M26,14 H27.6 V24 H26 Z"/><rect x="28.3" y="11.8" width="1.6" height="1.6" fill="#ececec"/><rect x="28.3" y="15.8" width="1.6" height="1.6" fill="#ececec"/><rect x="28.3" y="19.8" width="1.6" height="1.6" fill="#ececec"/><path fill="#4d4d4d" d="M9.5,16.5 L13,16.5 L19.5,8 L27.6,8 L27.6,12.5 L21.5,12.5 L15.5,22 L9.5,22 Z"/></svg><div class="t" style="left:128.0px;top:1186.9px;font-size:22.6px;line-height:22.6px;font-weight:400;color:#222;">joo4996_contact_details</div><div class="r" style="left:66.0px;top:1237.3px;width:18.0px;height:18.0px;background:#fff;border:2px solid #666;box-sizing:border-box;"></div><div class="r" style="left:70.0px;top:1245.3px;width:10.0px;height:2.0px;background:#555;"></div><div class="r" style="left:74.0px;top:1241.3px;width:2.0px;height:10.0px;background:#555;"></div><div class="r" style="left:84.0px;top:1242.0px;width:23.0px;height:2.0px;background:#444;"></div><svg class="r" style="left:93.0px;top:1235.0px;" width="32.0" height="28.0" viewBox="0 0 32 28" preserveAspectRatio="none"><path fill="#666" d="M0,0 H11.8 V28 H0 V26 H9.7 V2 H0 Z"/><path fill="#4d4d4d" d="M0,4.2 H1.8 V24 H0 Z M0,4.2 H7.7 V6 H0 Z M0,8.2 H7.7 V10 H0 Z M0,12 H7.7 V13.8 H0 Z M0,16 H7.7 V17.8 H0 Z M0,20 H9.7 V24 H0 Z"/><path fill="#666" d="M22,0 H31.8 V2 H23.8 V26 H31.8 V28 H22 Z"/><path fill="#4d4d4d" d="M26,4.2 H31.8 V6 H26 Z M23.8,8 H31.8 V10 H23.8 Z M27.6,8 H31.8 V24 H27.6 Z M26,14 H27.6 V24 H26 Z"/><rect x="28.3" y="11.8" width="1.6" height="1.6" fill="#ececec"/><rect x="28.3" y="15.8" width="1.6" height="1.6" fill="#ececec"/><rect x="28.3" y="19.8" width="1.6" height="1.6" fill="#ececec"/><path fill="#4d4d4d" d="M9.5,16.5 L13,16.5 L19.5,8 L27.6,8 L27.6,12.5 L21.5,12.5 L15.5,22 L9.5,22 Z"/></svg><div class="t" style="left:128.0px;top:1230.9px;font-size:22.6px;line-height:22.6px;font-weight:400;color:#222;">joo4996_content</div><div class="r" style="left:66.0px;top:1281.3px;width:18.0px;height:18.0px;background:#fff;border:2px solid #666;box-sizing:border-box;"></div><div class="r" style="left:70.0px;top:1289.3px;width:10.0px;height:2.0px;background:#555;"></div><div class="r" style="left:74.0px;top:1285.3px;width:2.0px;height:10.0px;background:#555;"></div><div class="r" style="left:84.0px;top:1286.0px;width:23.0px;height:2.0px;background:#444;"></div><svg class="r" style="left:93.0px;top:1279.0px;" width="32.0" height="28.0" viewBox="0 0 32 28" preserveAspectRatio="none"><path fill="#666" d="M0,0 H11.8 V28 H0 V26 H9.7 V2 H0 Z"/><path fill="#4d4d4d" d="M0,4.2 H1.8 V24 H0 Z M0,4.2 H7.7 V6 H0 Z M0,8.2 H7.7 V10 H0 Z M0,12 H7.7 V13.8 H0 Z M0,16 H7.7 V17.8 H0 Z M0,20 H9.7 V24 H0 Z"/><path fill="#666" d="M22,0 H31.8 V2 H23.8 V26 H31.8 V28 H22 Z"/><path fill="#4d4d4d" d="M26,4.2 H31.8 V6 H26 Z M23.8,8 H31.8 V10 H23.8 Z M27.6,8 H31.8 V24 H27.6 Z M26,14 H27.6 V24 H26 Z"/><rect x="28.3" y="11.8" width="1.6" height="1.6" fill="#ececec"/><rect x="28.3" y="15.8" width="1.6" height="1.6" fill="#ececec"/><rect x="28.3" y="19.8" width="1.6" height="1.6" fill="#ececec"/><path fill="#4d4d4d" d="M9.5,16.5 L13,16.5 L19.5,8 L27.6,8 L27.6,12.5 L21.5,12.5 L15.5,22 L9.5,22 Z"/></svg><div class="t" style="left:128.0px;top:1274.9px;font-size:22.6px;line-height:22.6px;font-weight:400;color:#222;">joo4996_contentitem_tag_map</div><div class="r" style="left:66.0px;top:1325.3px;width:18.0px;height:18.0px;background:#fff;border:2px solid #666;box-sizing:border-box;"></div><div class="r" style="left:70.0px;top:1333.3px;width:10.0px;height:2.0px;background:#555;"></div><div class="r" style="left:74.0px;top:1329.3px;width:2.0px;height:10.0px;background:#555;"></div><div class="r" style="left:84.0px;top:1330.0px;width:23.0px;height:2.0px;background:#444;"></div><svg class="r" style="left:93.0px;top:1323.0px;" width="32.0" height="28.0" viewBox="0 0 32 28" preserveAspectRatio="none"><path fill="#666" d="M0,0 H11.8 V28 H0 V26 H9.7 V2 H0 Z"/><path fill="#4d4d4d" d="M0,4.2 H1.8 V24 H0 Z M0,4.2 H7.7 V6 H0 Z M0,8.2 H7.7 V10 H0 Z M0,12 H7.7 V13.8 H0 Z M0,16 H7.7 V17.8 H0 Z M0,20 H9.7 V24 H0 Z"/><path fill="#666" d="M22,0 H31.8 V2 H23.8 V26 H31.8 V28 H22 Z"/><path fill="#4d4d4d" d="M26,4.2 H31.8 V6 H26 Z M23.8,8 H31.8 V10 H23.8 Z M27.6,8 H31.8 V24 H27.6 Z M26,14 H27.6 V24 H26 Z"/><rect x="28.3" y="11.8" width="1.6" height="1.6" fill="#ececec"/><rect x="28.3" y="15.8" width="1.6" height="1.6" fill="#ececec"/><rect x="28.3" y="19.8" width="1.6" height="1.6" fill="#ececec"/><path fill="#4d4d4d" d="M9.5,16.5 L13,16.5 L19.5,8 L27.6,8 L27.6,12.5 L21.5,12.5 L15.5,22 L9.5,22 Z"/></svg><div class="t" style="left:128.0px;top:1318.9px;font-size:22.6px;line-height:22.6px;font-weight:400;color:#222;">joo4996_content_frontpage</div><div class="r" style="left:66.0px;top:1369.3px;width:18.0px;height:18.0px;background:#fff;border:2px solid #666;box-sizing:border-box;"></div><div class="r" style="left:70.0px;top:1377.3px;width:10.0px;height:2.0px;background:#555;"></div><div class="r" style="left:74.0px;top:1373.3px;width:2.0px;height:10.0px;background:#555;"></div><div class="r" style="left:84.0px;top:1374.0px;width:23.0px;height:2.0px;background:#444;"></div><svg class="r" style="left:93.0px;top:1367.0px;" width="32.0" height="28.0" viewBox="0 0 32 28" preserveAspectRatio="none"><path fill="#666" d="M0,0 H11.8 V28 H0 V26 H9.7 V2 H0 Z"/><path fill="#4d4d4d" d="M0,4.2 H1.8 V24 H0 Z M0,4.2 H7.7 V6 H0 Z M0,8.2 H7.7 V10 H0 Z M0,12 H7.7 V13.8 H0 Z M0,16 H7.7 V17.8 H0 Z M0,20 H9.7 V24 H0 Z"/><path fill="#666" d="M22,0 H31.8 V2 H23.8 V26 H31.8 V28 H22 Z"/><path fill="#4d4d4d" d="M26,4.2 H31.8 V6 H26 Z M23.8,8 H31.8 V10 H23.8 Z M27.6,8 H31.8 V24 H27.6 Z M26,14 H27.6 V24 H26 Z"/><rect x="28.3" y="11.8" width="1.6" height="1.6" fill="#ececec"/><rect x="28.3" y="15.8" width="1.6" height="1.6" fill="#ececec"/><rect x="28.3" y="19.8" width="1.6" height="1.6" fill="#ececec"/><path fill="#4d4d4d" d="M9.5,16.5 L13,16.5 L19.5,8 L27.6,8 L27.6,12.5 L21.5,12.5 L15.5,22 L9.5,22 Z"/></svg><div class="t" style="left:128.0px;top:1362.9px;font-size:22.6px;line-height:22.6px;font-weight:400;color:#222;">joo4996_content_meta</div><div class="r" style="left:66.0px;top:1413.3px;width:18.0px;height:18.0px;background:#fff;border:2px solid #666;box-sizing:border-box;"></div><div class="r" style="left:70.0px;top:1421.3px;width:10.0px;height:2.0px;background:#555;"></div><div class="r" style="left:74.0px;top:1417.3px;width:2.0px;height:10.0px;background:#555;"></div><div class="r" style="left:84.0px;top:1418.0px;width:23.0px;height:2.0px;background:#444;"></div><svg class="r" style="left:93.0px;top:1411.0px;" width="32.0" height="28.0" viewBox="0 0 32 28" preserveAspectRatio="none"><path fill="#666" d="M0,0 H11.8 V28 H0 V26 H9.7 V2 H0 Z"/><path fill="#4d4d4d" d="M0,4.2 H1.8 V24 H0 Z M0,4.2 H7.7 V6 H0 Z M0,8.2 H7.7 V10 H0 Z M0,12 H7.7 V13.8 H0 Z M0,16 H7.7 V17.8 H0 Z M0,20 H9.7 V24 H0 Z"/><path fill="#666" d="M22,0 H31.8 V2 H23.8 V26 H31.8 V28 H22 Z"/><path fill="#4d4d4d" d="M26,4.2 H31.8 V6 H26 Z M23.8,8 H31.8 V10 H23.8 Z M27.6,8 H31.8 V24 H27.6 Z M26,14 H27.6 V24 H26 Z"/><rect x="28.3" y="11.8" width="1.6" height="1.6" fill="#ececec"/><rect x="28.3" y="15.8" width="1.6" height="1.6" fill="#ececec"/><rect x="28.3" y="19.8" width="1.6" height="1.6" fill="#ececec"/><path fill="#4d4d4d" d="M9.5,16.5 L13,16.5 L19.5,8 L27.6,8 L27.6,12.5 L21.5,12.5 L15.5,22 L9.5,22 Z"/></svg><div class="t" style="left:128.0px;top:1406.9px;font-size:22.6px;line-height:22.6px;font-weight:400;color:#222;">joo4996_content_rating</div><div class="r" style="left:66.0px;top:1457.3px;width:18.0px;height:18.0px;background:#fff;border:2px solid #666;box-sizing:border-box;"></div><div class="r" style="left:70.0px;top:1465.3px;width:10.0px;height:2.0px;background:#555;"></div><div class="r" style="left:74.0px;top:1461.3px;width:2.0px;height:10.0px;background:#555;"></div><div class="r" style="left:84.0px;top:1462.0px;width:23.0px;height:2.0px;background:#444;"></div><svg class="r" style="left:93.0px;top:1455.0px;" width="32.0" height="28.0" viewBox="0 0 32 28" preserveAspectRatio="none"><path fill="#666" d="M0,0 H11.8 V28 H0 V26 H9.7 V2 H0 Z"/><path fill="#4d4d4d" d="M0,4.2 H1.8 V24 H0 Z M0,4.2 H7.7 V6 H0 Z M0,8.2 H7.7 V10 H0 Z M0,12 H7.7 V13.8 H0 Z M0,16 H7.7 V17.8 H0 Z M0,20 H9.7 V24 H0 Z"/><path fill="#666" d="M22,0 H31.8 V2 H23.8 V26 H31.8 V28 H22 Z"/><path fill="#4d4d4d" d="M26,4.2 H31.8 V6 H26 Z M23.8,8 H31.8 V10 H23.8 Z M27.6,8 H31.8 V24 H27.6 Z M26,14 H27.6 V24 H26 Z"/><rect x="28.3" y="11.8" width="1.6" height="1.6" fill="#ececec"/><rect x="28.3" y="15.8" width="1.6" height="1.6" fill="#ececec"/><rect x="28.3" y="19.8" width="1.6" height="1.6" fill="#ececec"/><path fill="#4d4d4d" d="M9.5,16.5 L13,16.5 L19.5,8 L27.6,8 L27.6,12.5 L21.5,12.5 L15.5,22 L9.5,22 Z"/></svg><div class="t" style="left:128.0px;top:1450.9px;font-size:22.6px;line-height:22.6px;font-weight:400;color:#222;">joo4996_content_types</div><div class="r" style="left:66.0px;top:1501.3px;width:18.0px;height:18.0px;background:#fff;border:2px solid #666;box-sizing:border-box;"></div><div class="r" style="left:70.0px;top:1509.3px;width:10.0px;height:2.0px;background:#555;"></div><div class="r" style="left:74.0px;top:1505.3px;width:2.0px;height:10.0px;background:#555;"></div><div class="r" style="left:84.0px;top:1506.0px;width:23.0px;height:2.0px;background:#444;"></div><svg class="r" style="left:93.0px;top:1499.0px;" width="32.0" height="28.0" viewBox="0 0 32 28" preserveAspectRatio="none"><path fill="#666" d="M0,0 H11.8 V28 H0 V26 H9.7 V2 H0 Z"/><path fill="#4d4d4d" d="M0,4.2 H1.8 V24 H0 Z M0,4.2 H7.7 V6 H0 Z M0,8.2 H7.7 V10 H0 Z M0,12 H7.7 V13.8 H0 Z M0,16 H7.7 V17.8 H0 Z M0,20 H9.7 V24 H0 Z"/><path fill="#666" d="M22,0 H31.8 V2 H23.8 V26 H31.8 V28 H22 Z"/><path fill="#4d4d4d" d="M26,4.2 H31.8 V6 H26 Z M23.8,8 H31.8 V10 H23.8 Z M27.6,8 H31.8 V24 H27.6 Z M26,14 H27.6 V24 H26 Z"/><rect x="28.3" y="11.8" width="1.6" height="1.6" fill="#ececec"/><rect x="28.3" y="15.8" width="1.6" height="1.6" fill="#ececec"/><rect x="28.3" y="19.8" width="1.6" height="1.6" fill="#ececec"/><path fill="#4d4d4d" d="M9.5,16.5 L13,16.5 L19.5,8 L27.6,8 L27.6,12.5 L21.5,12.5 L15.5,22 L9.5,22 Z"/></svg><div class="t" style="left:128.0px;top:1494.9px;font-size:22.6px;line-height:22.6px;font-weight:400;color:#222;">joo4996_core_log_searches</div><div class="r" style="left:66.0px;top:1545.3px;width:18.0px;height:18.0px;background:#fff;border:2px solid #666;box-sizing:border-box;"></div><div class="r" style="left:70.0px;top:1553.3px;width:10.0px;height:2.0px;background:#555;"></div><div class="r" style="left:74.0px;top:1549.3px;width:2.0px;height:10.0px;background:#555;"></div><div class="r" style="left:84.0px;top:1550.0px;width:23.0px;height:2.0px;background:#444;"></div><svg class="r" style="left:93.0px;top:1543.0px;" width="32.0" height="28.0" viewBox="0 0 32 28" preserveAspectRatio="none"><path fill="#666" d="M0,0 H11.8 V28 H0 V26 H9.7 V2 H0 Z"/><path fill="#4d4d4d" d="M0,4.2 H1.8 V24 H0 Z M0,4.2 H7.7 V6 H0 Z M0,8.2 H7.7 V10 H0 Z M0,12 H7.7 V13.8 H0 Z M0,16 H7.7 V17.8 H0 Z M0,20 H9.7 V24 H0 Z"/><path fill="#666" d="M22,0 H31.8 V2 H23.8 V26 H31.8 V28 H22 Z"/><path fill="#4d4d4d" d="M26,4.2 H31.8 V6 H26 Z M23.8,8 H31.8 V10 H23.8 Z M27.6,8 H31.8 V24 H27.6 Z M26,14 H27.6 V24 H26 Z"/><rect x="28.3" y="11.8" width="1.6" height="1.6" fill="#ececec"/><rect x="28.3" y="15.8" width="1.6" height="1.6" fill="#ececec"/><rect x="28.3" y="19.8" width="1.6" height="1.6" fill="#ececec"/><path fill="#4d4d4d" d="M9.5,16.5 L13,16.5 L19.5,8 L27.6,8 L27.6,12.5 L21.5,12.5 L15.5,22 L9.5,22 Z"/></svg><div class="t" style="left:128.0px;top:1538.9px;font-size:22.6px;line-height:22.6px;font-weight:400;color:#222;">joo4996_droppics</div><div class="r" style="left:66.0px;top:1589.3px;width:18.0px;height:18.0px;background:#fff;border:2px solid #666;box-sizing:border-box;"></div><div class="r" style="left:70.0px;top:1597.3px;width:10.0px;height:2.0px;background:#555;"></div><div class="r" style="left:74.0px;top:1593.3px;width:2.0px;height:10.0px;background:#555;"></div><div class="r" style="left:84.0px;top:1594.0px;width:23.0px;height:2.0px;background:#444;"></div><svg class="r" style="left:93.0px;top:1587.0px;" width="32.0" height="28.0" viewBox="0 0 32 28" preserveAspectRatio="none"><path fill="#666" d="M0,0 H11.8 V28 H0 V26 H9.7 V2 H0 Z"/><path fill="#4d4d4d" d="M0,4.2 H1.8 V24 H0 Z M0,4.2 H7.7 V6 H0 Z M0,8.2 H7.7 V10 H0 Z M0,12 H7.7 V13.8 H0 Z M0,16 H7.7 V17.8 H0 Z M0,20 H9.7 V24 H0 Z"/><path fill="#666" d="M22,0 H31.8 V2 H23.8 V26 H31.8 V28 H22 Z"/><path fill="#4d4d4d" d="M26,4.2 H31.8 V6 H26 Z M23.8,8 H31.8 V10 H23.8 Z M27.6,8 H31.8 V24 H27.6 Z M26,14 H27.6 V24 H26 Z"/><rect x="28.3" y="11.8" width="1.6" height="1.6" fill="#ececec"/><rect x="28.3" y="15.8" width="1.6" height="1.6" fill="#ececec"/><rect x="28.3" y="19.8" width="1.6" height="1.6" fill="#ececec"/><path fill="#4d4d4d" d="M9.5,16.5 L13,16.5 L19.5,8 L27.6,8 L27.6,12.5 L21.5,12.5 L15.5,22 L9.5,22 Z"/></svg><div class="t" style="left:128.0px;top:1582.9px;font-size:22.6px;line-height:22.6px;font-weight:400;color:#222;">joo4996_droppics_custom</div><div class="r" style="left:66.0px;top:1633.3px;width:18.0px;height:18.0px;background:#fff;border:2px solid #666;box-sizing:border-box;"></div><div class="r" style="left:70.0px;top:1641.3px;width:10.0px;height:2.0px;background:#555;"></div><div class="r" style="left:74.0px;top:1637.3px;width:2.0px;height:10.0px;background:#555;"></div><div class="r" style="left:84.0px;top:1638.0px;width:23.0px;height:2.0px;background:#444;"></div><svg class="r" style="left:93.0px;top:1631.0px;" width="32.0" height="28.0" viewBox="0 0 32 28" preserveAspectRatio="none"><path fill="#666" d="M0,0 H11.8 V28 H0 V26 H9.7 V2 H0 Z"/><path fill="#4d4d4d" d="M0,4.2 H1.8 V24 H0 Z M0,4.2 H7.7 V6 H0 Z M0,8.2 H7.7 V10 H0 Z M0,12 H7.7 V13.8 H0 Z M0,16 H7.7 V17.8 H0 Z M0,20 H9.7 V24 H0 Z"/><path fill="#666" d="M22,0 H31.8 V2 H23.8 V26 H31.8 V28 H22 Z"/><path fill="#4d4d4d" d="M26,4.2 H31.8 V6 H26 Z M23.8,8 H31.8 V10 H23.8 Z M27.6,8 H31.8 V24 H27.6 Z M26,14 H27.6 V24 H26 Z"/><rect x="28.3" y="11.8" width="1.6" height="1.6" fill="#ececec"/><rect x="28.3" y="15.8" width="1.6" height="1.6" fill="#ececec"/><rect x="28.3" y="19.8" width="1.6" height="1.6" fill="#ececec"/><path fill="#4d4d4d" d="M9.5,16.5 L13,16.5 L19.5,8 L27.6,8 L27.6,12.5 L21.5,12.5 L15.5,22 L9.5,22 Z"/></svg><div class="t" style="left:128.0px;top:1626.9px;font-size:22.6px;line-height:22.6px;font-weight:400;color:#222;">joo4996_droppics_pictures</div><div class="r" style="left:66.0px;top:1677.3px;width:18.0px;height:18.0px;background:#fff;border:2px solid #666;box-sizing:border-box;"></div><div class="r" style="left:70.0px;top:1685.3px;width:10.0px;height:2.0px;background:#555;"></div><div class="r" style="left:74.0px;top:1681.3px;width:2.0px;height:10.0px;background:#555;"></div><div class="r" style="left:84.0px;top:1682.0px;width:23.0px;height:2.0px;background:#444;"></div><svg class="r" style="left:93.0px;top:1675.0px;" width="32.0" height="28.0" viewBox="0 0 32 28" preserveAspectRatio="none"><path fill="#666" d="M0,0 H11.8 V28 H0 V26 H9.7 V2 H0 Z"/><path fill="#4d4d4d" d="M0,4.2 H1.8 V24 H0 Z M0,4.2 H7.7 V6 H0 Z M0,8.2 H7.7 V10 H0 Z M0,12 H7.7 V13.8 H0 Z M0,16 H7.7 V17.8 H0 Z M0,20 H9.7 V24 H0 Z"/><path fill="#666" d="M22,0 H31.8 V2 H23.8 V26 H31.8 V28 H22 Z"/><path fill="#4d4d4d" d="M26,4.2 H31.8 V6 H26 Z M23.8,8 H31.8 V10 H23.8 Z M27.6,8 H31.8 V24 H27.6 Z M26,14 H27.6 V24 H26 Z"/><rect x="28.3" y="11.8" width="1.6" height="1.6" fill="#ececec"/><rect x="28.3" y="15.8" width="1.6" height="1.6" fill="#ececec"/><rect x="28.3" y="19.8" width="1.6" height="1.6" fill="#ececec"/><path fill="#4d4d4d" d="M9.5,16.5 L13,16.5 L19.5,8 L27.6,8 L27.6,12.5 L21.5,12.5 L15.5,22 L9.5,22 Z"/></svg><div class="t" style="left:128.0px;top:1670.9px;font-size:22.6px;line-height:22.6px;font-weight:400;color:#222;">joo4996_extensions</div><div class="r" style="left:66.0px;top:1721.3px;width:18.0px;height:18.0px;background:#fff;border:2px solid #666;box-sizing:border-box;"></div><div class="r" style="left:70.0px;top:1729.3px;width:10.0px;height:2.0px;background:#555;"></div><div class="r" style="left:74.0px;top:1725.3px;width:2.0px;height:10.0px;background:#555;"></div><div class="r" style="left:84.0px;top:1726.0px;width:23.0px;height:2.0px;background:#444;"></div><svg class="r" style="left:93.0px;top:1719.0px;" width="32.0" height="28.0" viewBox="0 0 32 28" preserveAspectRatio="none"><path fill="#666" d="M0,0 H11.8 V28 H0 V26 H9.7 V2 H0 Z"/><path fill="#4d4d4d" d="M0,4.2 H1.8 V24 H0 Z M0,4.2 H7.7 V6 H0 Z M0,8.2 H7.7 V10 H0 Z M0,12 H7.7 V13.8 H0 Z M0,16 H7.7 V17.8 H0 Z M0,20 H9.7 V24 H0 Z"/><path fill="#666" d="M22,0 H31.8 V2 H23.8 V26 H31.8 V28 H22 Z"/><path fill="#4d4d4d" d="M26,4.2 H31.8 V6 H26 Z M23.8,8 H31.8 V10 H23.8 Z M27.6,8 H31.8 V24 H27.6 Z M26,14 H27.6 V24 H26 Z"/><rect x="28.3" y="11.8" width="1.6" height="1.6" fill="#ececec"/><rect x="28.3" y="15.8" width="1.6" height="1.6" fill="#ececec"/><rect x="28.3" y="19.8" width="1.6" height="1.6" fill="#ececec"/><path fill="#4d4d4d" d="M9.5,16.5 L13,16.5 L19.5,8 L27.6,8 L27.6,12.5 L21.5,12.5 L15.5,22 L9.5,22 Z"/></svg><div class="t" style="left:128.0px;top:1714.9px;font-size:22.6px;line-height:22.6px;font-weight:400;color:#222;">joo4996_fields</div><div class="r" style="left:66.0px;top:1765.3px;width:18.0px;height:18.0px;background:#fff;border:2px solid #666;box-sizing:border-box;"></div><div class="r" style="left:70.0px;top:1773.3px;width:10.0px;height:2.0px;background:#555;"></div><div class="r" style="left:74.0px;top:1769.3px;width:2.0px;height:10.0px;background:#555;"></div><div class="r" style="left:84.0px;top:1770.0px;width:23.0px;height:2.0px;background:#444;"></div><svg class="r" style="left:93.0px;top:1763.0px;" width="32.0" height="28.0" viewBox="0 0 32 28" preserveAspectRatio="none"><path fill="#666" d="M0,0 H11.8 V28 H0 V26 H9.7 V2 H0 Z"/><path fill="#4d4d4d" d="M0,4.2 H1.8 V24 H0 Z M0,4.2 H7.7 V6 H0 Z M0,8.2 H7.7 V10 H0 Z M0,12 H7.7 V13.8 H0 Z M0,16 H7.7 V17.8 H0 Z M0,20 H9.7 V24 H0 Z"/><path fill="#666" d="M22,0 H31.8 V2 H23.8 V26 H31.8 V28 H22 Z"/><path fill="#4d4d4d" d="M26,4.2 H31.8 V6 H26 Z M23.8,8 H31.8 V10 H23.8 Z M27.6,8 H31.8 V24 H27.6 Z M26,14 H27.6 V24 H26 Z"/><rect x="28.3" y="11.8" width="1.6" height="1.6" fill="#ececec"/><rect x="28.3" y="15.8" width="1.6" height="1.6" fill="#ececec"/><rect x="28.3" y="19.8" width="1.6" height="1.6" fill="#ececec"/><path fill="#4d4d4d" d="M9.5,16.5 L13,16.5 L19.5,8 L27.6,8 L27.6,12.5 L21.5,12.5 L15.5,22 L9.5,22 Z"/></svg><div class="t" style="left:128.0px;top:1758.9px;font-size:22.6px;line-height:22.6px;font-weight:400;color:#222;">joo4996_fields_categories</div><div class="r" style="left:66.0px;top:1809.3px;width:18.0px;height:18.0px;background:#fff;border:2px solid #666;box-sizing:border-box;"></div><div class="r" style="left:70.0px;top:1817.3px;width:10.0px;height:2.0px;background:#555;"></div><div class="r" style="left:74.0px;top:1813.3px;width:2.0px;height:10.0px;background:#555;"></div><div class="r" style="left:84.0px;top:1814.0px;width:23.0px;height:2.0px;background:#444;"></div><svg class="r" style="left:93.0px;top:1807.0px;" width="32.0" height="28.0" viewBox="0 0 32 28" preserveAspectRatio="none"><path fill="#666" d="M0,0 H11.8 V28 H0 V26 H9.7 V2 H0 Z"/><path fill="#4d4d4d" d="M0,4.2 H1.8 V24 H0 Z M0,4.2 H7.7 V6 H0 Z M0,8.2 H7.7 V10 H0 Z M0,12 H7.7 V13.8 H0 Z M0,16 H7.7 V17.8 H0 Z M0,20 H9.7 V24 H0 Z"/><path fill="#666" d="M22,0 H31.8 V2 H23.8 V26 H31.8 V28 H22 Z"/><path fill="#4d4d4d" d="M26,4.2 H31.8 V6 H26 Z M23.8,8 H31.8 V10 H23.8 Z M27.6,8 H31.8 V24 H27.6 Z M26,14 H27.6 V24 H26 Z"/><rect x="28.3" y="11.8" width="1.6" height="1.6" fill="#ececec"/><rect x="28.3" y="15.8" width="1.6" height="1.6" fill="#ececec"/><rect x="28.3" y="19.8" width="1.6" height="1.6" fill="#ececec"/><path fill="#4d4d4d" d="M9.5,16.5 L13,16.5 L19.5,8 L27.6,8 L27.6,12.5 L21.5,12.5 L15.5,22 L9.5,22 Z"/></svg><div class="t" style="left:128.0px;top:1802.9px;font-size:22.6px;line-height:22.6px;font-weight:400;color:#222;">joo4996_fields_groups</div><div class="r" style="left:109.2px;top:848.0px;width:2.0px;height:87.0px;background:#444;"></div><div class="r" style="left:101.0px;top:885.3px;width:18.0px;height:18.0px;background:#fff;border:2px solid #666;box-sizing:border-box;"></div><div class="r" style="left:105.0px;top:893.3px;width:10.0px;height:2.0px;background:#555;"></div><div class="r" style="left:109.0px;top:889.3px;width:2.0px;height:10.0px;background:#555;"></div><div class="r" style="left:119.0px;top:890.0px;width:12.0px;height:2.0px;background:#444;"></div><div class="t" style="left:165.4px;top:877.9px;font-size:22.6px;line-height:22.6px;font-weight:400;color:#222;font-style:italic;">Colonnes</div><div class="r" style="left:101.0px;top:929.3px;width:18.0px;height:18.0px;background:#fff;border:2px solid #666;box-sizing:border-box;"></div><div class="r" style="left:105.0px;top:937.3px;width:10.0px;height:2.0px;background:#555;"></div><div class="r" style="left:109.0px;top:933.3px;width:2.0px;height:10.0px;background:#555;"></div><div class="r" style="left:119.0px;top:934.0px;width:12.0px;height:2.0px;background:#444;"></div><div class="t" style="left:165.4px;top:921.9px;font-size:22.6px;line-height:22.6px;font-weight:400;color:#222;font-style:italic;">Index</div><svg class="r" style="left:132.0px;top:885.0px;" width="22.0" height="28.6" viewBox="0 0 22 28.6" preserveAspectRatio="none"><rect x="0" y="0" width="8" height="28.6" rx="0.8" fill="#4a4a4a"/><rect x="14" y="0" width="8" height="28.6" rx="0.8" fill="#4a4a4a"/></svg><svg class="r" style="left:131.0px;top:929.0px;" width="26.0" height="28.0" viewBox="0 0 26 28" preserveAspectRatio="none"><rect x="1" y="1" width="24" height="26" fill="#f2f2f2" stroke="#666" stroke-width="2"/><path stroke="#666" stroke-width="2" d="M5,7 L21,7 M9,12 L21,12 M5,17 L21,17 M9,22 L21,22"/></svg><div class="r" style="left:488.0px;top:77.0px;width:2898.0px;height:95.7px;background:#f5f6f8;"></div><div class="r" style="left:753.0px;top:77.0px;width:223.0px;height:95.7px;background:#fff;"></div><svg class="r" style="left:557.0px;top:110.6px;" width="28.2" height="27.9" viewBox="0 0 32 32" preserveAspectRatio="none"><rect x="1.5" y="1.5" width="29" height="29" fill="none" stroke="#666" stroke-width="3"/><path stroke="#666" stroke-width="2" d="M5,7 L27,7 M5,12 L27,12 M5,16.5 L27,16.5 M5,21 L27,21 M5,25.5 L27,25.5 M10,12 L10,27 M16,12 L16,27 M22,12 L22,27"/></svg><div class="t" style="left:604.0px;top:115.8px;font-size:22.4px;line-height:22.4px;font-weight:700;color:#555;transform:scaleX(0.9375);transform-origin:0 0;-webkit-text-stroke:0.7px #555;">PARCOURIR</div><svg class="r" style="left:779.0px;top:110.6px;" width="31.7" height="28.4" viewBox="0 0 32 28" preserveAspectRatio="none"><path fill="#666" d="M0,0 H11.8 V28 H0 V26 H9.7 V2 H0 Z"/><path fill="#4d4d4d" d="M0,4.2 H1.8 V24 H0 Z M0,4.2 H7.7 V6 H0 Z M0,8.2 H7.7 V10 H0 Z M0,12 H7.7 V13.8 H0 Z M0,16 H7.7 V17.8 H0 Z M0,20 H9.7 V24 H0 Z"/><path fill="#666" d="M22,0 H31.8 V2 H23.8 V26 H31.8 V28 H22 Z"/><path fill="#4d4d4d" d="M26,4.2 H31.8 V6 H26 Z M23.8,8 H31.8 V10 H23.8 Z M27.6,8 H31.8 V24 H27.6 Z M26,14 H27.6 V24 H26 Z"/><rect x="28.3" y="11.8" width="1.6" height="1.6" fill="#fff"/><rect x="28.3" y="15.8" width="1.6" height="1.6" fill="#fff"/><rect x="28.3" y="19.8" width="1.6" height="1.6" fill="#fff"/><path fill="#4d4d4d" d="M9.5,16.5 L13,16.5 L19.5,8 L27.6,8 L27.6,12.5 L21.5,12.5 L15.5,22 L9.5,22 Z"/></svg><div class="t" style="left:828.0px;top:115.8px;font-size:22.4px;line-height:22.4px;font-weight:700;color:#555;transform:scaleX(0.9375);transform-origin:0 0;-webkit-text-stroke:0.7px #555;">STRUCTURE</div><svg class="r" style="left:1005.0px;top:110.6px;" width="28.5" height="27.9" viewBox="0 0 32 32" preserveAspectRatio="none"><circle cx="16" cy="16" r="15.5" fill="#555"/><path fill="#fff" d="M11.5,8 L24,16 L11.5,24 Z"/></svg><div class="t" style="left:1051.5px;top:115.8px;font-size:22.4px;line-height:22.4px;font-weight:700;color:#555;transform:scaleX(0.9375);transform-origin:0 0;-webkit-text-stroke:0.7px #555;">SQL</div><svg class="r" style="left:1142.0px;top:110.6px;" width="29.0" height="27.9" viewBox="0 0 32 32" preserveAspectRatio="none"><circle cx="12" cy="12" r="9" fill="none" stroke="#555" stroke-width="4"/><path stroke="#555" stroke-width="5" d="M18.5,18.5 L30,30"/></svg><div class="t" style="left:1190.0px;top:115.8px;font-size:22.4px;line-height:22.4px;font-weight:700;color:#555;transform:scaleX(0.9375);transform-origin:0 0;-webkit-text-stroke:0.7px #555;">RECHERCHER</div><svg class="r" style="left:1381.0px;top:111.0px;" width="28.0" height="30.0" viewBox="6 6 28 30" preserveAspectRatio="none"><path fill="#555" d="M6,6 H17.8 V35.6 H6 V33.9 H15.8 V27.5 H6 V25.8 H15.8 V15.8 H6 V14 H15.8 V7.7 H6 Z"/><path fill="#4d4d4d" d="M8,20.9 L16,16 L16,18.4 L23.5,18.4 L23.5,23.5 L16,23.5 L16,25.8 Z"/><path fill="none" stroke="#666" stroke-width="1.8" d="M33.9,16.9 H26.9 V24.9 H33.9"/><path fill="#555" d="M31,5.4 L32.1,7.8 L34.5,8.9 L32.1,10 L31,12.4 L29.9,10 L27.5,8.9 L29.9,7.8 Z"/></svg><div class="t" style="left:1428.8px;top:115.8px;font-size:22.4px;line-height:22.4px;font-weight:700;color:#555;transform:scaleX(0.9375);transform-origin:0 0;-webkit-text-stroke:0.7px #555;">INSÉRER</div><svg class="r" style="left:1568.8px;top:110.6px;" width="28.2" height="27.9" viewBox="0 0 32 32" preserveAspectRatio="none"><path fill="none" stroke="#555" stroke-width="3" d="M1.5,22 L1.5,30 L30.5,30 L30.5,22"/><path fill="#555" d="M14.5,3 L17.5,3 L17.5,14 L22,14 L16,22 L10,14 L14.5,14 Z"/></svg><div class="t" style="left:1616.3px;top:115.8px;font-size:22.4px;line-height:22.4px;font-weight:700;color:#555;transform:scaleX(0.9375);transform-origin:0 0;-webkit-text-stroke:0.7px #555;">EXPORTER</div><svg class="r" style="left:1777.0px;top:110.6px;" width="30.0" height="27.9" viewBox="0 0 32 32" preserveAspectRatio="none"><path fill="none" stroke="#555" stroke-width="3" d="M1.5,22 L1.5,30 L30.5,30 L30.5,22"/><path fill="#555" d="M14.5,24 L17.5,24 L17.5,12 L22,12 L16,3 L10,12 L14.5,12 Z"/></svg><div class="t" style="left:1826.7px;top:115.8px;font-size:22.4px;line-height:22.4px;font-weight:700;color:#555;transform:scaleX(0.9375);transform-origin:0 0;-webkit-text-stroke:0.7px #555;">IMPORTER</div><svg class="r" style="left:1986.5px;top:108.5px;" width="30.5" height="31.0" viewBox="0 0 32 32" preserveAspectRatio="none"><circle cx="16" cy="16" r="10.8" fill="#5a5a5a"/><path d="M11,8 L13.2,2.2 L18.8,2.2 L21,8 Z" fill="#5a5a5a" stroke="#5a5a5a" stroke-width="1.6" stroke-linejoin="round" transform="rotate(0 16 16)"/><path d="M11,8 L13.2,2.2 L18.8,2.2 L21,8 Z" fill="#5a5a5a" stroke="#5a5a5a" stroke-width="1.6" stroke-linejoin="round" transform="rotate(60 16 16)"/><path d="M11,8 L13.2,2.2 L18.8,2.2 L21,8 Z" fill="#5a5a5a" stroke="#5a5a5a" stroke-width="1.6" stroke-linejoin="round" transform="rotate(120 16 16)"/><path d="M11,8 L13.2,2.2 L18.8,2.2 L21,8 Z" fill="#5a5a5a" stroke="#5a5a5a" stroke-width="1.6" stroke-linejoin="round" transform="rotate(180 16 16)"/><path d="M11,8 L13.2,2.2 L18.8,2.2 L21,8 Z" fill="#5a5a5a" stroke="#5a5a5a" stroke-width="1.6" stroke-linejoin="round" transform="rotate(240 16 16)"/><path d="M11,8 L13.2,2.2 L18.8,2.2 L21,8 Z" fill="#5a5a5a" stroke="#5a5a5a" stroke-width="1.6" stroke-linejoin="round" transform="rotate(300 16 16)"/><ellipse cx="16" cy="16" rx="5.4" ry="6" fill="#f5f6f8"/></svg><div class="t" style="left:2036.8px;top:115.8px;font-size:22.4px;line-height:22.4px;font-weight:700;color:#555;transform:scaleX(0.9375);transform-origin:0 0;-webkit-text-stroke:0.7px #555;">OPÉRATIONS</div><svg class="r" style="left:2228.4px;top:109.0px;" width="26.6" height="30.0" viewBox="0 0 32 32" preserveAspectRatio="none"><path fill="#555" d="M1,2 L16,16 L1,30 Z M15,2 L31,16 L15,30 Z"/></svg><div class="t" style="left:2274.0px;top:115.8px;font-size:22.4px;line-height:22.4px;font-weight:700;color:#555;transform:scaleX(0.9375);transform-origin:0 0;-webkit-text-stroke:0.7px #555;">DÉCLENCHEURS</div><div class="r" style="left:538.0px;top:213.0px;width:350.0px;height:54.0px;background:#c7c7c7;"></div><div class="r" style="left:888.0px;top:213.0px;width:344.0px;height:54.0px;background:#f2f2f2;"></div><svg class="r" style="left:574.6px;top:225.0px;" width="32.1" height="28.0" viewBox="0 0 32 28" preserveAspectRatio="none"><path fill="#555" d="M0,0 H11.8 V28 H0 V26 H9.7 V2 H0 Z"/><path fill="#3d3d3d" d="M0,4.2 H1.8 V24 H0 Z M0,4.2 H7.7 V6 H0 Z M0,8.2 H7.7 V10 H0 Z M0,12 H7.7 V13.8 H0 Z M0,16 H7.7 V17.8 H0 Z M0,20 H9.7 V24 H0 Z"/><path fill="#555" d="M22,0 H31.8 V2 H23.8 V26 H31.8 V28 H22 Z"/><path fill="#3d3d3d" d="M26,4.2 H31.8 V6 H26 Z M23.8,8 H31.8 V10 H23.8 Z M27.6,8 H31.8 V24 H27.6 Z M26,14 H27.6 V24 H26 Z"/><rect x="28.3" y="11.8" width="1.6" height="1.6" fill="#c7c7c7"/><rect x="28.3" y="15.8" width="1.6" height="1.6" fill="#c7c7c7"/><rect x="28.3" y="19.8" width="1.6" height="1.6" fill="#c7c7c7"/><path fill="#3d3d3d" d="M9.5,16.5 L13,16.5 L19.5,8 L27.6,8 L27.6,12.5 L21.5,12.5 L15.5,22 L9.5,22 Z"/></svg><div class="t" style="left:623.0px;top:229.7px;font-size:22.6px;line-height:22.6px;font-weight:700;color:#333;transform:scaleX(0.916);transform-origin:0 0;-webkit-text-stroke:0.8px #333;">STRUCTURE DE TABLE</div><svg class="r" style="left:920.0px;top:220.0px;" width="42.0" height="38.0" viewBox="0 0 42 38" preserveAspectRatio="none"><g fill="none" stroke="#555" stroke-width="2"><rect x="7.8" y="13.8" width="11" height="11" rx="1"/><rect x="23.6" y="5.9" width="11.5" height="11" rx="1"/><rect x="23.6" y="22" width="11.5" height="10.7" rx="1"/></g><g fill="#4a4a4a"><rect x="6.8" y="12.8" width="13" height="3.4" rx="1"/><rect x="22.6" y="4.9" width="13.5" height="3.4" rx="1"/><rect x="22.6" y="21" width="13.5" height="3.4" rx="1"/><ellipse cx="13.3" cy="19.9" rx="2" ry="1"/><ellipse cx="29.3" cy="11.9" rx="2" ry="1"/><ellipse cx="29.3" cy="27.9" rx="2" ry="1"/></g><path d="M15.3,12.6 L21.8,5.2 M15.3,25.8 L21.8,32.4" stroke="#666" stroke-width="1.8" stroke-dasharray="1.8,0.9"/></svg><div class="t" style="left:973.3px;top:229.7px;font-size:22.6px;line-height:22.6px;font-weight:700;color:#333;transform:scaleX(0.938);transform-origin:0 0;-webkit-text-stroke:0.8px #333;">VUE RELATIONNELLE</div><div class="t" style="left:589.4px;top:302.6px;font-size:22px;line-height:22px;font-weight:700;color:#555;transform:scaleX(1.03);transform-origin:0 0;">#</div><div class="t" style="left:630.9px;top:302.6px;font-size:22px;line-height:22px;font-weight:700;color:#555;transform:scaleX(1.03);transform-origin:0 0;">Nom</div><div class="t" style="left:803.3px;top:302.6px;font-size:22px;line-height:22px;font-weight:700;color:#555;transform:scaleX(1.03);transform-origin:0 0;">Type</div><div class="t" style="left:970.5px;top:302.6px;font-size:22px;line-height:22px;font-weight:700;color:#555;transform:scaleX(1.03);transform-origin:0 0;">Interclassement</div><div class="t" style="left:1202.0px;top:302.6px;font-size:22px;line-height:22px;font-weight:700;color:#555;transform:scaleX(1.03);transform-origin:0 0;">Attributs</div><div class="t" style="left:1340.8px;top:302.6px;font-size:22px;line-height:22px;font-weight:700;color:#555;transform:scaleX(1.03);transform-origin:0 0;">Null</div><div class="t" style="left:1412.0px;top:302.6px;font-size:22px;line-height:22px;font-weight:700;color:#555;transform:scaleX(1.03);transform-origin:0 0;">Valeur par défaut</div><div class="r" style="left:522.0px;top:341.0px;width:2864.0px;height:2.0px;background:#d6d6d6;"></div><div class="r" style="left:522.0px;top:343.0px;width:2864.0px;height:82.0px;background:#fcfcfc;"></div><div class="r" style="left:535.0px;top:369.0px;width:28.0px;height:27.5px;background:#fff;border:3.5px solid #83809a;box-sizing:border-box;border-radius:3.5px;"></div><div class="t" style="left:589.4px;top:373.9px;font-size:23px;line-height:23px;font-weight:400;color:#333;">1</div><div class="t" style="left:631.5px;top:373.9px;font-size:22px;line-height:22px;font-weight:700;color:#333;transform:scaleX(1.02);transform-origin:0 0;">id</div><svg class="r" style="left:664.0px;top:371.5px;" width="30.0" height="28.5" viewBox="0 0 30 30" preserveAspectRatio="none"><path fill="#626262" fill-rule="evenodd" stroke="#626262" stroke-width="0.8" stroke-linejoin="round" d="M15.5,1 L24.7,1 L29,5.3 L29,12.2 L26.4,15.1 L22.4,18.8 L19.5,18.8 L17.8,16.2 L16.1,18 L10.9,18 L10.9,22.5 L6.9,22.5 L6.9,26.6 L3.7,28.9 L1.2,28.9 L1.2,21.7 L11.2,12.8 L11.2,7.3 L13.2,3.6 Z M21.3,5.3 L24.7,5.3 L24.7,9.1 L21.3,9.1 Z"/></svg><div class="t" style="left:803.3px;top:373.9px;font-size:23px;line-height:23px;font-weight:400;color:#333;">int(10)</div><div class="t" style="left:1202.5px;top:373.9px;font-size:23px;line-height:23px;font-weight:400;color:#333;transform:scaleX(0.92);transform-origin:0 0;">UNSIGNED</div><div class="t" style="left:1340.8px;top:373.9px;font-size:23px;line-height:23px;font-weight:400;color:#333;">Non</div><div class="t" style="left:1412.0px;top:373.9px;font-size:23px;line-height:23px;font-weight:400;color:#333;font-style:italic;">Aucun(e)</div><div class="r" style="left:522.0px;top:425.0px;width:2864.0px;height:91.0px;background:#f5f5f5;"></div><div class="r" style="left:535.0px;top:456.3px;width:28.0px;height:27.5px;background:#fff;border:3.5px solid #83809a;box-sizing:border-box;border-radius:3.5px;"></div><div class="t" style="left:589.4px;top:460.1px;font-size:23px;line-height:23px;font-weight:400;color:#333;">2</div><div class="t" style="left:631.5px;top:454.5px;font-size:22px;line-height:22px;font-weight:700;color:#333;transform:scaleX(1.02);transform-origin:0 0;">parent_id</div><svg class="r" style="left:746.0px;top:451.7px;" width="29.8" height="30.3" viewBox="0 0 30 30" preserveAspectRatio="none"><path fill="#626262" fill-rule="evenodd" stroke="#626262" stroke-width="0.8" stroke-linejoin="round" d="M15.5,1 L24.7,1 L29,5.3 L29,12.2 L26.4,15.1 L22.4,18.8 L19.5,18.8 L17.8,16.2 L16.1,18 L10.9,18 L10.9,22.5 L6.9,22.5 L6.9,26.6 L3.7,28.9 L1.2,28.9 L1.2,21.7 L11.2,12.8 L11.2,7.3 L13.2,3.6 Z M21.3,5.3 L24.7,5.3 L24.7,9.1 L21.3,9.1 Z"/></svg><div class="t" style="left:803.3px;top:460.1px;font-size:23px;line-height:23px;font-weight:400;color:#333;">int(11)</div><div class="t" style="left:1340.8px;top:460.1px;font-size:23px;line-height:23px;font-weight:400;color:#333;">Non</div><div class="t" style="left:1412.0px;top:460.1px;font-size:23px;line-height:23px;font-weight:400;color:#333;">0</div><div class="r" style="left:522.0px;top:516.0px;width:2864.0px;height:82.0px;background:#fcfcfc;"></div><div class="r" style="left:535.0px;top:542.5px;width:28.0px;height:27.5px;background:#fff;border:3.5px solid #83809a;box-sizing:border-box;border-radius:3.5px;"></div><div class="t" style="left:589.4px;top:546.8px;font-size:23px;line-height:23px;font-weight:400;color:#333;">3</div><div class="t" style="left:631.5px;top:546.9px;font-size:22px;line-height:22px;font-weight:700;color:#333;transform:scaleX(1.02);transform-origin:0 0;">lft</div><svg class="r" style="left:666.8px;top:543.4px;" width="30.2" height="29.4" viewBox="0 0 30 30" preserveAspectRatio="none"><path fill="#626262" fill-rule="evenodd" stroke="#626262" stroke-width="0.8" stroke-linejoin="round" d="M15.5,1 L24.7,1 L29,5.3 L29,12.2 L26.4,15.1 L22.4,18.8 L19.5,18.8 L17.8,16.2 L16.1,18 L10.9,18 L10.9,22.5 L6.9,22.5 L6.9,26.6 L3.7,28.9 L1.2,28.9 L1.2,21.7 L11.2,12.8 L11.2,7.3 L13.2,3.6 Z M21.3,5.3 L24.7,5.3 L24.7,9.1 L21.3,9.1 Z"/></svg><div class="t" style="left:803.3px;top:546.8px;font-size:23px;line-height:23px;font-weight:400;color:#333;">int(11)</div><div class="t" style="left:1340.8px;top:546.8px;font-size:23px;line-height:23px;font-weight:400;color:#333;">Non</div><div class="t" style="left:1412.0px;top:546.8px;font-size:23px;line-height:23px;font-weight:400;color:#333;">0</div><div class="r" style="left:522.0px;top:598.0px;width:2864.0px;height:81.0px;background:#f5f5f5;"></div><div class="r" style="left:535.0px;top:624.0px;width:28.0px;height:27.5px;background:#fff;border:3.5px solid #83809a;box-sizing:border-box;border-radius:3.5px;"></div><div class="t" style="left:589.4px;top:626.9px;font-size:23px;line-height:23px;font-weight:400;color:#333;">4</div><div class="t" style="left:631.5px;top:627.4px;font-size:22px;line-height:22px;font-weight:700;color:#333;transform:scaleX(1.02);transform-origin:0 0;">rgt</div><svg class="r" style="left:673.8px;top:625.0px;" width="29.8" height="29.3" viewBox="0 0 30 30" preserveAspectRatio="none"><path fill="#626262" fill-rule="evenodd" stroke="#626262" stroke-width="0.8" stroke-linejoin="round" d="M15.5,1 L24.7,1 L29,5.3 L29,12.2 L26.4,15.1 L22.4,18.8 L19.5,18.8 L17.8,16.2 L16.1,18 L10.9,18 L10.9,22.5 L6.9,22.5 L6.9,26.6 L3.7,28.9 L1.2,28.9 L1.2,21.7 L11.2,12.8 L11.2,7.3 L13.2,3.6 Z M21.3,5.3 L24.7,5.3 L24.7,9.1 L21.3,9.1 Z"/></svg><div class="t" style="left:803.3px;top:626.9px;font-size:23px;line-height:23px;font-weight:400;color:#333;">int(11)</div><div class="t" style="left:1340.8px;top:626.9px;font-size:23px;line-height:23px;font-weight:400;color:#333;">Non</div><div class="t" style="left:1412.0px;top:626.9px;font-size:23px;line-height:23px;font-weight:400;color:#333;">389</div><div class="r" style="left:522.0px;top:679.0px;width:2864.0px;height:125.4px;background:#fcfcfc;"></div><div class="r" style="left:535.0px;top:726.6px;width:28.0px;height:27.5px;background:#fff;border:3.5px solid #83809a;box-sizing:border-box;border-radius:3.5px;"></div><div class="t" style="left:589.4px;top:730.4px;font-size:23px;line-height:23px;font-weight:400;color:#333;">5</div><div class="t" style="left:631.5px;top:709.4px;font-size:22px;line-height:22px;font-weight:700;color:#333;transform:scaleX(1.02);transform-origin:0 0;">level</div><div class="t" style="left:803.3px;top:730.4px;font-size:23px;line-height:23px;font-weight:400;color:#333;">int(10)</div><div class="t" style="left:1202.5px;top:730.4px;font-size:23px;line-height:23px;font-weight:400;color:#333;transform:scaleX(0.92);transform-origin:0 0;">UNSIGNED</div><div class="t" style="left:1340.8px;top:730.4px;font-size:23px;line-height:23px;font-weight:400;color:#333;">Non</div><div class="t" style="left:1412.0px;top:730.4px;font-size:23px;line-height:23px;font-weight:400;color:#333;">0</div><div class="r" style="left:522.0px;top:804.4px;width:2864.0px;height:124.6px;background:#f5f5f5;"></div><div class="r" style="left:535.0px;top:852.4px;width:28.0px;height:27.5px;background:#fff;border:3.5px solid #83809a;box-sizing:border-box;border-radius:3.5px;"></div><div class="t" style="left:589.4px;top:856.2px;font-size:23px;line-height:23px;font-weight:400;color:#333;">6</div><div class="t" style="left:631.5px;top:834.3px;font-size:22px;line-height:22px;font-weight:700;color:#333;transform:scaleX(1.02);transform-origin:0 0;">name</div><svg class="r" style="left:705.0px;top:831.4px;" width="30.0" height="28.9" viewBox="0 0 30 30" preserveAspectRatio="none"><path fill="#626262" fill-rule="evenodd" stroke="#626262" stroke-width="0.8" stroke-linejoin="round" d="M15.5,1 L24.7,1 L29,5.3 L29,12.2 L26.4,15.1 L22.4,18.8 L19.5,18.8 L17.8,16.2 L16.1,18 L10.9,18 L10.9,22.5 L6.9,22.5 L6.9,26.6 L3.7,28.9 L1.2,28.9 L1.2,21.7 L11.2,12.8 L11.2,7.3 L13.2,3.6 Z M21.3,5.3 L24.7,5.3 L24.7,9.1 L21.3,9.1 Z"/></svg><div class="t" style="left:803.3px;top:856.2px;font-size:23px;line-height:23px;font-weight:400;color:#333;">varchar(50)</div><div class="t" style="left:971.4px;top:856.2px;font-size:23px;line-height:23px;font-weight:400;color:#333;font-style:italic;">utf8mb4_unicode_ci</div><div class="t" style="left:1340.8px;top:856.2px;font-size:23px;line-height:23px;font-weight:400;color:#333;">Non</div><div class="t" style="left:1412.0px;top:856.2px;font-size:23px;line-height:23px;font-weight:400;color:#333;">root.1</div><div class="r" style="left:522.0px;top:929.0px;width:2864.0px;height:125.6px;background:#fcfcfc;"></div><div class="r" style="left:535.0px;top:977.7px;width:28.0px;height:27.5px;background:#fff;border:3.5px solid #83809a;box-sizing:border-box;border-radius:3.5px;"></div><div class="t" style="left:589.4px;top:982.0px;font-size:23px;line-height:23px;font-weight:400;color:#333;">7</div><div class="t" style="left:631.5px;top:959.9px;font-size:22px;line-height:22px;font-weight:700;color:#333;transform:scaleX(1.02);transform-origin:0 0;">title</div><div class="t" style="left:803.3px;top:982.0px;font-size:23px;line-height:23px;font-weight:400;color:#333;">varchar(100)</div><div class="t" style="left:971.4px;top:982.0px;font-size:23px;line-height:23px;font-weight:400;color:#333;font-style:italic;">utf8mb4_unicode_ci</div><div class="t" style="left:1340.8px;top:982.0px;font-size:23px;line-height:23px;font-weight:400;color:#333;">Non</div><div class="t" style="left:1412.0px;top:982.0px;font-size:23px;line-height:23px;font-weight:400;color:#333;">Root Asset</div><div class="r" style="left:522.0px;top:1054.6px;width:2864.0px;height:93.1px;background:#f5f5f5;"></div><div class="r" style="left:535.0px;top:1086.0px;width:28.0px;height:27.5px;background:#fff;border:3.5px solid #83809a;box-sizing:border-box;border-radius:3.5px;"></div><div class="t" style="left:589.4px;top:1090.0px;font-size:23px;line-height:23px;font-weight:400;color:#333;">8</div><div class="t" style="left:631.5px;top:1084.4px;font-size:22px;line-height:22px;font-weight:700;color:#333;transform:scaleX(1.02);transform-origin:0 0;">rules</div><div class="t" style="left:803.3px;top:1090.0px;font-size:23px;line-height:23px;font-weight:400;color:#333;">varchar(5120)</div><div class="t" style="left:971.4px;top:1090.0px;font-size:23px;line-height:23px;font-weight:400;color:#333;font-style:italic;">utf8mb4_unicode_ci</div><div class="t" style="left:1340.8px;top:1090.0px;font-size:23px;line-height:23px;font-weight:400;color:#333;">Non</div><div class="t" style="left:1412.0px;top:1089.9px;font-size:23.1px;line-height:23.1px;font-weight:400;color:#333;">{"core.login.site":{"6":1,"2":1},"core.login.admin":{"6":1},"core.login.offline":[],"core.admin":{"8":1},"core.manage":{"7":1},"core.create":{"6":1,"3":1},"core.delete":{"6":1},"core.edit":{"6":1,"4":1},"core.edit.state":{"6":1,"5":1},"core.edit.own":{"6":1,"3":1}}</div><svg class="r" style="left:544.6px;top:1190.0px;" width="56.6" height="30.0" viewBox="0 0 57 30" preserveAspectRatio="none"><path fill="none" stroke="#666" stroke-width="2.4" d="M9,6 L9,28.5 L56,28.5"/><path fill="#555" d="M9,0 L18,9 L0,9 Z"/></svg><div class="r" style="left:624.2px;top:1189.3px;width:28.0px;height:27.2px;background:#fff;border:3.5px solid #83809a;box-sizing:border-box;border-radius:3.5px;"></div><div class="t" style="left:657.2px;top:1194.2px;font-size:23.1px;line-height:23.1px;font-weight:400;color:#255585;">Tout cocher</div><div class="t" style="left:828.0px;top:1194.9px;font-size:22.3px;line-height:22.3px;font-weight:400;color:#333;font-style:italic;">Avec la sélection :</div><svg class="r" style="left:1037.0px;top:1193.6px;" width="27.8" height="27.9" viewBox="0 0 28 28" preserveAspectRatio="none"><rect x="1.5" y="1.5" width="25" height="25" fill="none" stroke="#777" stroke-width="2.5"/><path stroke="#777" stroke-width="1.6" d="M4,6 L24,6 M4,10.5 L24,10.5 M4,14.5 L24,14.5 M4,18.5 L24,18.5 M4,22.5 L24,22.5 M9,10.5 L9,25 M14,10.5 L14,25 M19,10.5 L19,25"/></svg><div class="t" style="left:1073.4px;top:1194.1px;font-size:23.1px;line-height:23.1px;font-weight:400;color:#255585;">Parcourir</div><svg class="r" style="left:1213.5px;top:1192.0px;" width="29.9" height="30.0" viewBox="0 0 30 30" preserveAspectRatio="none"><g transform="rotate(-45 15 15)"><rect x="-0.5" y="12.3" width="26" height="5.4" fill="#e6e6e6" stroke="#6a6a6a" stroke-width="1.7"/><path d="M-0.5,11.6 L-6,15 L-0.5,18.4 Z" fill="#6a6a6a"/><rect x="25.5" y="11.6" width="5" height="6.8" rx="2" fill="#666"/></g></svg><div class="t" style="left:1250.0px;top:1194.1px;font-size:23.1px;line-height:23.1px;font-weight:400;color:#255585;">Modifier</div><svg class="r" style="left:1382.0px;top:1193.4px;" width="28.6" height="28.6" viewBox="0 0 30 30" preserveAspectRatio="none"><circle cx="15" cy="15" r="14.5" fill="#555"/><rect x="5" y="12.5" width="20" height="5" fill="#fff"/></svg><div class="t" style="left:1418.3px;top:1194.1px;font-size:23.1px;line-height:23.1px;font-weight:400;color:#255585;">Supprimer</div><svg class="r" style="left:1572.0px;top:1192.4px;" width="30.0" height="29.6" viewBox="0 0 30 30" preserveAspectRatio="none"><path fill="#626262" fill-rule="evenodd" stroke="#626262" stroke-width="0.8" stroke-linejoin="round" d="M15.5,1 L24.7,1 L29,5.3 L29,12.2 L26.4,15.1 L22.4,18.8 L19.5,18.8 L17.8,16.2 L16.1,18 L10.9,18 L10.9,22.5 L6.9,22.5 L6.9,26.6 L3.7,28.9 L1.2,28.9 L1.2,21.7 L11.2,12.8 L11.2,7.3 L13.2,3.6 Z M21.3,5.3 L24.7,5.3 L24.7,9.1 L21.3,9.1 Z"/></svg><div class="t" style="left:1609.2px;top:1194.1px;font-size:23.1px;line-height:23.1px;font-weight:400;color:#255585;">Primaire</div><svg class="r" style="left:1741.5px;top:1193.0px;" width="29.1" height="30.0" viewBox="0 0 28 30" preserveAspectRatio="none"><rect x="1.5" y="1.5" width="25" height="27" fill="none" stroke="#777" stroke-width="2.5"/><path stroke="#777" stroke-width="1.6" d="M4,6 L24,6"/><path stroke="#666" stroke-width="2" fill="none" d="M6,10 L6,25 M9,10 L9,25 M13,10 L13,24 L21,24 L21,10"/></svg><div class="t" style="left:1777.8px;top:1194.1px;font-size:23.1px;line-height:23.1px;font-weight:400;color:#255585;">Unique</div><svg class="r" style="left:1897.8px;top:1193.0px;" width="28.6" height="30.0" viewBox="0 0 28 30" preserveAspectRatio="none"><rect x="1.5" y="1.5" width="25" height="27" fill="none" stroke="#777" stroke-width="2.5"/><path stroke="#666" stroke-width="2" d="M4,6 L24,6 M9,10 L24,10 M4,14 L24,14 M9,18 L24,18 M4,22 L24,22 M4,10 L9,14 M4,18 L9,22"/></svg><div class="t" style="left:1934.0px;top:1194.1px;font-size:23.1px;line-height:23.1px;font-weight:400;color:#255585;">Index</div><svg class="r" style="left:2036.6px;top:1193.0px;" width="28.6" height="30.0" viewBox="0 0 28 30" preserveAspectRatio="none"><rect x="1.5" y="1.5" width="25" height="27" fill="none" stroke="#777" stroke-width="2.5"/><path stroke="#777" stroke-width="1.6" d="M4,6 L24,6"/><path stroke="#777" stroke-width="1.6" stroke-dasharray="2,2" d="M6,10 L6,26"/><path stroke="#555" stroke-width="2.2" fill="none" d="M21,11 L13,11 L13,17 L21,17 L21,24 L12,24"/></svg><div class="t" style="left:2072.5px;top:1194.1px;font-size:23.1px;line-height:23.1px;font-weight:400;color:#255585;">Spatial</div><svg class="r" style="left:2187.7px;top:1193.0px;" width="28.3" height="30.0" viewBox="0 0 28 30" preserveAspectRatio="none"><rect x="1.5" y="1.5" width="25" height="27" fill="none" stroke="#777" stroke-width="2.5"/><path stroke="#777" stroke-width="1.6" d="M4,6 L24,6"/><path stroke="#555" stroke-width="2.4" d="M10,11 L24,11 M17,11 L17,27"/><path stroke="#777" stroke-width="1.5" d="M5,15 L11,15 M5,19 L11,19 M5,23 L11,23 M7,13 L7,26"/></svg><div class="t" style="left:2223.2px;top:1194.1px;font-size:23.1px;line-height:23.1px;font-weight:400;color:#255585;">Texte entier</div><div class="r" style="left:522.0px;top:1268.0px;width:2836.0px;height:2.0px;background:#d6d6d6;"></div><svg class="r" style="left:530.0px;top:1308.0px;" width="30.0" height="26.0" viewBox="0 0 30 26" preserveAspectRatio="none"><rect x="9.6" y="1" width="11.2" height="3.9" rx="1" fill="#555"/><rect x="5.4" y="4.7" width="19.6" height="2.1" fill="#555"/><rect x="0.7" y="8.9" width="28.4" height="8.6" rx="1" fill="#555"/><rect x="4.9" y="14" width="20.1" height="10.8" fill="#555"/><rect x="9.1" y="15.2" width="11.7" height="5.6" fill="#fff"/></svg><div class="t" style="left:566.0px;top:1307.6px;font-size:24.4px;line-height:24.4px;font-weight:400;color:#255585;">Imprimer</div><svg class="r" style="left:696.8px;top:1306.0px;" width="32.2" height="30.0" viewBox="0 0 34 32" preserveAspectRatio="none"><rect x="8" y="1" width="20" height="14" fill="#fff" stroke="#666" stroke-width="2"/><path stroke="#666" stroke-width="1.5" d="M11,5 L25,5 M11,9 L25,9"/><rect x="1" y="17" width="12" height="14" fill="#fff" stroke="#666" stroke-width="2"/><rect x="22" y="16" width="11" height="12" fill="#fff" stroke="#666" stroke-width="2"/><path stroke="#666" stroke-width="1.5" d="M3,21 L11,21 M3,25 L11,25 M25,20 L30,20"/><path fill="none" stroke="#444" stroke-width="2.5" d="M9,22 L15,22 L19,17 L22,17"/></svg><div class="t" style="left:734.9px;top:1308.7px;font-size:23.1px;line-height:23.1px;font-weight:400;color:#255585;">Suggérer des optimisations de structure</div><svg class="r" style="left:1158.0px;top:1307.0px;" width="29.0" height="29.0" viewBox="0 0 30 30" preserveAspectRatio="none"><circle cx="15" cy="15" r="14.5" fill="#444"/><circle cx="15" cy="7.5" r="2.6" fill="#fff"/><path fill="#fff" d="M11,12 L17.5,12 L17.5,22 L20,22 L20,25 L10,25 L10,22 L12.5,22 L12.5,15 L11,15 Z"/></svg><svg class="r" style="left:1222.8px;top:1304.0px;" width="28.2" height="32.0" viewBox="0 0 30 32" preserveAspectRatio="none"><path stroke="#888" stroke-width="1.6" fill="none" d="M1,1 L1,31 M5,4 L5,28 M9,1 L9,31 M1,4 L13,4 M1,1 L13,1"/><path stroke="#888" stroke-width="1.2" d="M2,8 L8,8 M2,12 L8,12 M2,16 L8,16 M2,20 L8,20 M2,24 L8,24"/><path fill="none" stroke="#666" stroke-width="2.5" d="M14,10 L20,10 A8,8 0 0,1 20,26 L14,26"/><path fill="#666" d="M14,6 L14,14 L10,10 Z"/></svg><div class="t" style="left:1260.9px;top:1309.2px;font-size:22.6px;line-height:22.6px;font-weight:400;color:#255585;">Déplacer des colonnes</div><svg class="r" style="left:1527.0px;top:1304.0px;" width="30.0" height="32.0" viewBox="0 0 32 32" preserveAspectRatio="none"><path stroke="#333" stroke-width="6" d="M3,29 L18,14"/><path stroke="#888" stroke-width="2" d="M5,26 L16,15"/><path stroke="#999" stroke-width="1.6" d="M23,1 L23,17 M15,9 L31,9 M17,3 L29,15 M29,3 L17,15"/></svg><div class="t" style="left:1564.3px;top:1307.7px;font-size:23.5px;line-height:23.5px;font-weight:400;color:#255585;">Normaliser</div><svg class="r" style="left:530.5px;top:1365.5px;" width="29.0" height="31.0" viewBox="6 6 28 30" preserveAspectRatio="none"><path fill="#555" d="M6,6 H17.8 V35.6 H6 V33.9 H15.8 V27.5 H6 V25.8 H15.8 V15.8 H6 V14 H15.8 V7.7 H6 Z"/><path fill="#4d4d4d" d="M8,20.9 L16,16 L16,18.4 L23.5,18.4 L23.5,23.5 L16,23.5 L16,25.8 Z"/><path fill="none" stroke="#666" stroke-width="1.8" d="M33.9,16.9 H26.9 V24.9 H33.9"/><path fill="#555" d="M31,5.4 L32.1,7.8 L34.5,8.9 L32.1,10 L31,12.4 L29.9,10 L27.5,8.9 L29.9,7.8 Z"/></svg><div class="t" style="left:571.8px;top:1366.5px;font-size:23.6px;line-height:23.6px;font-weight:400;color:#333;">Ajouter</div><div class="r" style="left:666.0px;top:1350.0px;width:299.5px;height:55.5px;background:#fff;border:2px solid #bdbdbd;box-sizing:border-box;"></div><div class="t" style="left:678.6px;top:1367.5px;font-size:23px;line-height:23px;font-weight:400;color:#555;">1</div><div class="r" style="left:918.0px;top:1359.0px;width:35.4px;height:36.0px;background:#e6e5ec;"></div><svg class="r" style="left:926.0px;top:1363.0px;" width="20.0" height="28.0" viewBox="0 0 20 28" preserveAspectRatio="none"><path fill="none" stroke="#858099" stroke-width="2.2" d="M3,9 L10,2 L17,9 M3,19 L10,26 L17,19"/></svg><div class="t" style="left:984.0px;top:1367.9px;font-size:22.6px;line-height:22.6px;font-weight:400;color:#333;">colonne(s)</div><div class="r" style="left:1117.0px;top:1353.0px;width:229.0px;height:49.0px;background:#fff;border:2px solid #bdbdbd;box-sizing:border-box;"></div><div class="t" style="left:1127.0px;top:1367.8px;font-size:22.7px;line-height:22.7px;font-weight:400;color:#333;">après rules</div><svg class="r" style="left:1321.0px;top:1373.0px;" width="16.0" height="10.0" viewBox="0 0 16 9" preserveAspectRatio="none"><path d="M1,1 L8,8 L15,1" fill="none" stroke="#444" stroke-width="2"/></svg><div class="r" style="left:1363.0px;top:1355.0px;width:125.0px;height:50.0px;background:#3d6b8b;"></div><div class="t" style="left:1381.0px;top:1369.4px;font-size:22.4px;line-height:22.4px;font-weight:400;color:#fff;">Exécuter</div><div class="r" style="left:522.0px;top:1474.0px;width:2837.0px;height:358.0px;background:#f5f5f5;border:2px solid #d3d3d3;border-bottom:none;box-sizing:border-box;"></div><div class="r" style="left:564.0px;top:1474.0px;width:121.0px;height:2.0px;background:#f5f5f5;"></div><div class="t" style="left:574.0px;top:1463.5px;font-size:23px;line-height:23px;font-weight:400;color:#333;">Index</div><svg class="r" style="left:644.0px;top:1463.0px;" width="29.0" height="29.0" viewBox="0 0 30 30" preserveAspectRatio="none"><circle cx="15" cy="15" r="14.5" fill="#444"/><circle cx="15" cy="7.5" r="2.6" fill="#fff"/><path fill="#fff" d="M11,12 L17.5,12 L17.5,22 L20,22 L20,25 L10,25 L10,22 L12.5,22 L12.5,15 L11,15 Z"/></svg><div class="r" style="left:564.0px;top:1549.0px;width:1760.0px;height:60.0px;background:#fff;"></div><div class="r" style="left:564.0px;top:1609.0px;width:1760.0px;height:2.0px;background:#d6d6d6;"></div><div class="t" style="left:577.6px;top:1568.2px;font-size:22px;line-height:22px;font-weight:700;color:#555;transform:scaleX(1.03);transform-origin:0 0;">Action</div><div class="t" style="left:1074.0px;top:1568.2px;font-size:22px;line-height:22px;font-weight:700;color:#555;transform:scaleX(1.03);transform-origin:0 0;">Nom de l'index</div><div class="t" style="left:1270.4px;top:1568.2px;font-size:22px;line-height:22px;font-weight:700;color:#555;transform:scaleX(1.03);transform-origin:0 0;">Type</div><div class="t" style="left:1360.0px;top:1568.2px;font-size:22px;line-height:22px;font-weight:700;color:#555;transform:scaleX(1.03);transform-origin:0 0;">Unique</div><div class="t" style="left:1466.0px;top:1568.2px;font-size:22px;line-height:22px;font-weight:700;color:#555;transform:scaleX(1.03);transform-origin:0 0;">Compressé</div><div class="t" style="left:1613.0px;top:1568.2px;font-size:22px;line-height:22px;font-weight:700;color:#555;transform:scaleX(1.03);transform-origin:0 0;">Colonne</div><div class="t" style="left:1736.0px;top:1568.2px;font-size:22px;line-height:22px;font-weight:700;color:#555;transform:scaleX(1.03);transform-origin:0 0;">Cardinalité</div><div class="t" style="left:1884.0px;top:1568.2px;font-size:22px;line-height:22px;font-weight:700;color:#555;transform:scaleX(1.03);transform-origin:0 0;">Interclassement</div><div class="t" style="left:2088.0px;top:1568.2px;font-size:22px;line-height:22px;font-weight:700;color:#555;transform:scaleX(1.03);transform-origin:0 0;">Null</div><div class="t" style="left:2160.7px;top:1568.2px;font-size:22px;line-height:22px;font-weight:700;color:#555;transform:scaleX(1.03);transform-origin:0 0;">Commentaire</div><div class="r" style="left:564.0px;top:1611.0px;width:1760.0px;height:221.0px;background:#fcfcfc;"></div><div class="r" style="left:1600.0px;top:1793.0px;width:547.0px;height:39.0px;background:#f5f5f5;"></div><svg class="r" style="left:585.6px;top:1628.5px;" width="30.4" height="30.5" viewBox="0 0 30 30" preserveAspectRatio="none"><g transform="rotate(-45 15 15)"><rect x="-0.5" y="12.3" width="26" height="5.4" fill="#e6e6e6" stroke="#6a6a6a" stroke-width="1.7"/><path d="M-0.5,11.6 L-6,15 L-0.5,18.4 Z" fill="#6a6a6a"/><rect x="25.5" y="11.6" width="5" height="6.8" rx="2" fill="#666"/></g></svg><div class="t" style="left:621.6px;top:1628.7px;font-size:23.1px;line-height:23.1px;font-weight:400;color:#255585;">Éditer</div><svg class="r" style="left:717.0px;top:1630.3px;" width="27.6" height="25.5" viewBox="0 0 31 31" preserveAspectRatio="none"><path fill="#111" d="M0,9 L18,9 L18,12 L3,12 L3,19 L18,19 L18,22 L0,22 Z M5,14 L14,14 L14,17 L5,17 Z M16,1 L28,1 L28,4 L23.5,4 L23.5,27 L28,27 L28,30 L16,30 L16,27 L20.5,27 L20.5,4 L16,4 Z M25,9 L31,9 L31,22 L25,22 L25,19 L28,19 L28,12 L25,12 Z"/></svg><div class="t" style="left:752.6px;top:1628.7px;font-size:23.1px;line-height:23.1px;font-weight:400;color:#255585;">Renommer</div><svg class="r" style="left:902.9px;top:1629.0px;" width="28.6" height="28.3" viewBox="0 0 30 30" preserveAspectRatio="none"><circle cx="15" cy="15" r="14.5" fill="#555"/><rect x="5" y="12.5" width="20" height="5" fill="#fff"/></svg><div class="t" style="left:938.5px;top:1628.7px;font-size:23.1px;line-height:23.1px;font-weight:400;color:#255585;">Supprimer</div><div class="t" style="left:1074.5px;top:1628.9px;font-size:22.9px;line-height:22.9px;font-weight:700;color:#333;transform:scaleX(0.93);transform-origin:0 0;">PRIMARY</div><div class="t" style="left:1271.4px;top:1629.5px;font-size:22.2px;line-height:22.2px;font-weight:400;color:#333;transform:scaleX(0.84);transform-origin:0 0;">BTREE</div><div class="t" style="left:1360.0px;top:1628.8px;font-size:23px;line-height:23px;font-weight:400;color:#333;">Oui</div><div class="t" style="left:1466.0px;top:1628.8px;font-size:23px;line-height:23px;font-weight:400;color:#333;">Non</div><svg class="r" style="left:585.6px;top:1690.7px;" width="30.4" height="30.5" viewBox="0 0 30 30" preserveAspectRatio="none"><g transform="rotate(-45 15 15)"><rect x="-0.5" y="12.3" width="26" height="5.4" fill="#e6e6e6" stroke="#6a6a6a" stroke-width="1.7"/><path d="M-0.5,11.6 L-6,15 L-0.5,18.4 Z" fill="#6a6a6a"/><rect x="25.5" y="11.6" width="5" height="6.8" rx="2" fill="#666"/></g></svg><div class="t" style="left:621.6px;top:1690.9px;font-size:23.1px;line-height:23.1px;font-weight:400;color:#255585;">Éditer</div><svg class="r" style="left:717.0px;top:1692.5px;" width="27.6" height="25.5" viewBox="0 0 31 31" preserveAspectRatio="none"><path fill="#111" d="M0,9 L18,9 L18,12 L3,12 L3,19 L18,19 L18,22 L0,22 Z M5,14 L14,14 L14,17 L5,17 Z M16,1 L28,1 L28,4 L23.5,4 L23.5,27 L28,27 L28,30 L16,30 L16,27 L20.5,27 L20.5,4 L16,4 Z M25,9 L31,9 L31,22 L25,22 L25,19 L28,19 L28,12 L25,12 Z"/></svg><div class="t" style="left:752.6px;top:1690.9px;font-size:23.1px;line-height:23.1px;font-weight:400;color:#255585;">Renommer</div><svg class="r" style="left:902.9px;top:1691.2px;" width="28.6" height="28.3" viewBox="0 0 30 30" preserveAspectRatio="none"><circle cx="15" cy="15" r="14.5" fill="#555"/><rect x="5" y="12.5" width="20" height="5" fill="#fff"/></svg><div class="t" style="left:938.5px;top:1690.9px;font-size:23.1px;line-height:23.1px;font-weight:400;color:#255585;">Supprimer</div><div class="t" style="left:1074.5px;top:1691.9px;font-size:22px;line-height:22px;font-weight:700;color:#333;transform:scaleX(1.0);transform-origin:0 0;">idx_asset_name</div><div class="t" style="left:1271.4px;top:1691.7px;font-size:22.2px;line-height:22.2px;font-weight:400;color:#333;transform:scaleX(0.84);transform-origin:0 0;">BTREE</div><div class="t" style="left:1360.0px;top:1691.0px;font-size:23px;line-height:23px;font-weight:400;color:#333;">Oui</div><div class="t" style="left:1466.0px;top:1691.0px;font-size:23px;line-height:23px;font-weight:400;color:#333;">Non</div><svg class="r" style="left:585.6px;top:1780.9px;" width="30.4" height="30.5" viewBox="0 0 30 30" preserveAspectRatio="none"><g transform="rotate(-45 15 15)"><rect x="-0.5" y="12.3" width="26" height="5.4" fill="#e6e6e6" stroke="#6a6a6a" stroke-width="1.7"/><path d="M-0.5,11.6 L-6,15 L-0.5,18.4 Z" fill="#6a6a6a"/><rect x="25.5" y="11.6" width="5" height="6.8" rx="2" fill="#666"/></g></svg><div class="t" style="left:621.6px;top:1781.1px;font-size:23.1px;line-height:23.1px;font-weight:400;color:#255585;">Éditer</div><svg class="r" style="left:717.0px;top:1782.7px;" width="27.6" height="25.5" viewBox="0 0 31 31" preserveAspectRatio="none"><path fill="#111" d="M0,9 L18,9 L18,12 L3,12 L3,19 L18,19 L18,22 L0,22 Z M5,14 L14,14 L14,17 L5,17 Z M16,1 L28,1 L28,4 L23.5,4 L23.5,27 L28,27 L28,30 L16,30 L16,27 L20.5,27 L20.5,4 L16,4 Z M25,9 L31,9 L31,22 L25,22 L25,19 L28,19 L28,12 L25,12 Z"/></svg><div class="t" style="left:752.6px;top:1781.1px;font-size:23.1px;line-height:23.1px;font-weight:400;color:#255585;">Renommer</div><svg class="r" style="left:902.9px;top:1781.4px;" width="28.6" height="28.3" viewBox="0 0 30 30" preserveAspectRatio="none"><circle cx="15" cy="15" r="14.5" fill="#555"/><rect x="5" y="12.5" width="20" height="5" fill="#fff"/></svg><div class="t" style="left:938.5px;top:1781.1px;font-size:23.1px;line-height:23.1px;font-weight:400;color:#255585;">Supprimer</div><div class="t" style="left:1074.5px;top:1753.1px;font-size:22px;line-height:22px;font-weight:700;color:#333;transform:scaleX(1.0);transform-origin:0 0;">idx_lft_rgt</div><div class="t" style="left:1271.4px;top:1781.9px;font-size:22.2px;line-height:22.2px;font-weight:400;color:#333;transform:scaleX(0.84);transform-origin:0 0;">BTREE</div><div class="t" style="left:1360.0px;top:1781.2px;font-size:23px;line-height:23px;font-weight:400;color:#333;">Non</div><div class="t" style="left:1466.0px;top:1781.2px;font-size:23px;line-height:23px;font-weight:400;color:#333;">Non</div><div class="t" style="left:1613.0px;top:1629.3px;font-size:23px;line-height:23px;font-weight:400;color:#333;">id</div><div class="t" style="left:1736.0px;top:1629.3px;font-size:23px;line-height:23px;font-weight:400;color:#333;">190</div><div class="t" style="left:1884.0px;top:1629.3px;font-size:23px;line-height:23px;font-weight:400;color:#333;">A</div><div class="t" style="left:2088.0px;top:1629.3px;font-size:23px;line-height:23px;font-weight:400;color:#333;">Non</div><div class="t" style="left:1613.0px;top:1691.5px;font-size:23px;line-height:23px;font-weight:400;color:#333;">name</div><div class="t" style="left:1736.0px;top:1691.5px;font-size:23px;line-height:23px;font-weight:400;color:#333;">190</div><div class="t" style="left:1884.0px;top:1691.5px;font-size:23px;line-height:23px;font-weight:400;color:#333;">A</div><div class="t" style="left:2088.0px;top:1691.5px;font-size:23px;line-height:23px;font-weight:400;color:#333;">Non</div><div class="t" style="left:1613.0px;top:1751.9px;font-size:23px;line-height:23px;font-weight:400;color:#333;">lft</div><div class="t" style="left:1736.0px;top:1751.9px;font-size:23px;line-height:23px;font-weight:400;color:#333;">190</div><div class="t" style="left:1884.0px;top:1751.9px;font-size:23px;line-height:23px;font-weight:400;color:#333;">A</div><div class="t" style="left:2088.0px;top:1751.9px;font-size:23px;line-height:23px;font-weight:400;color:#333;">Non</div><div class="t" style="left:1613.0px;top:1813.0px;font-size:23px;line-height:23px;font-weight:400;color:#333;">rgt</div><div class="t" style="left:1736.0px;top:1813.0px;font-size:23px;line-height:23px;font-weight:400;color:#333;">190</div><div class="t" style="left:1884.0px;top:1813.0px;font-size:23px;line-height:23px;font-weight:400;color:#333;">A</div><div class="t" style="left:2088.0px;top:1813.0px;font-size:23px;line-height:23px;font-weight:400;color:#333;">Non</div></body></html>
